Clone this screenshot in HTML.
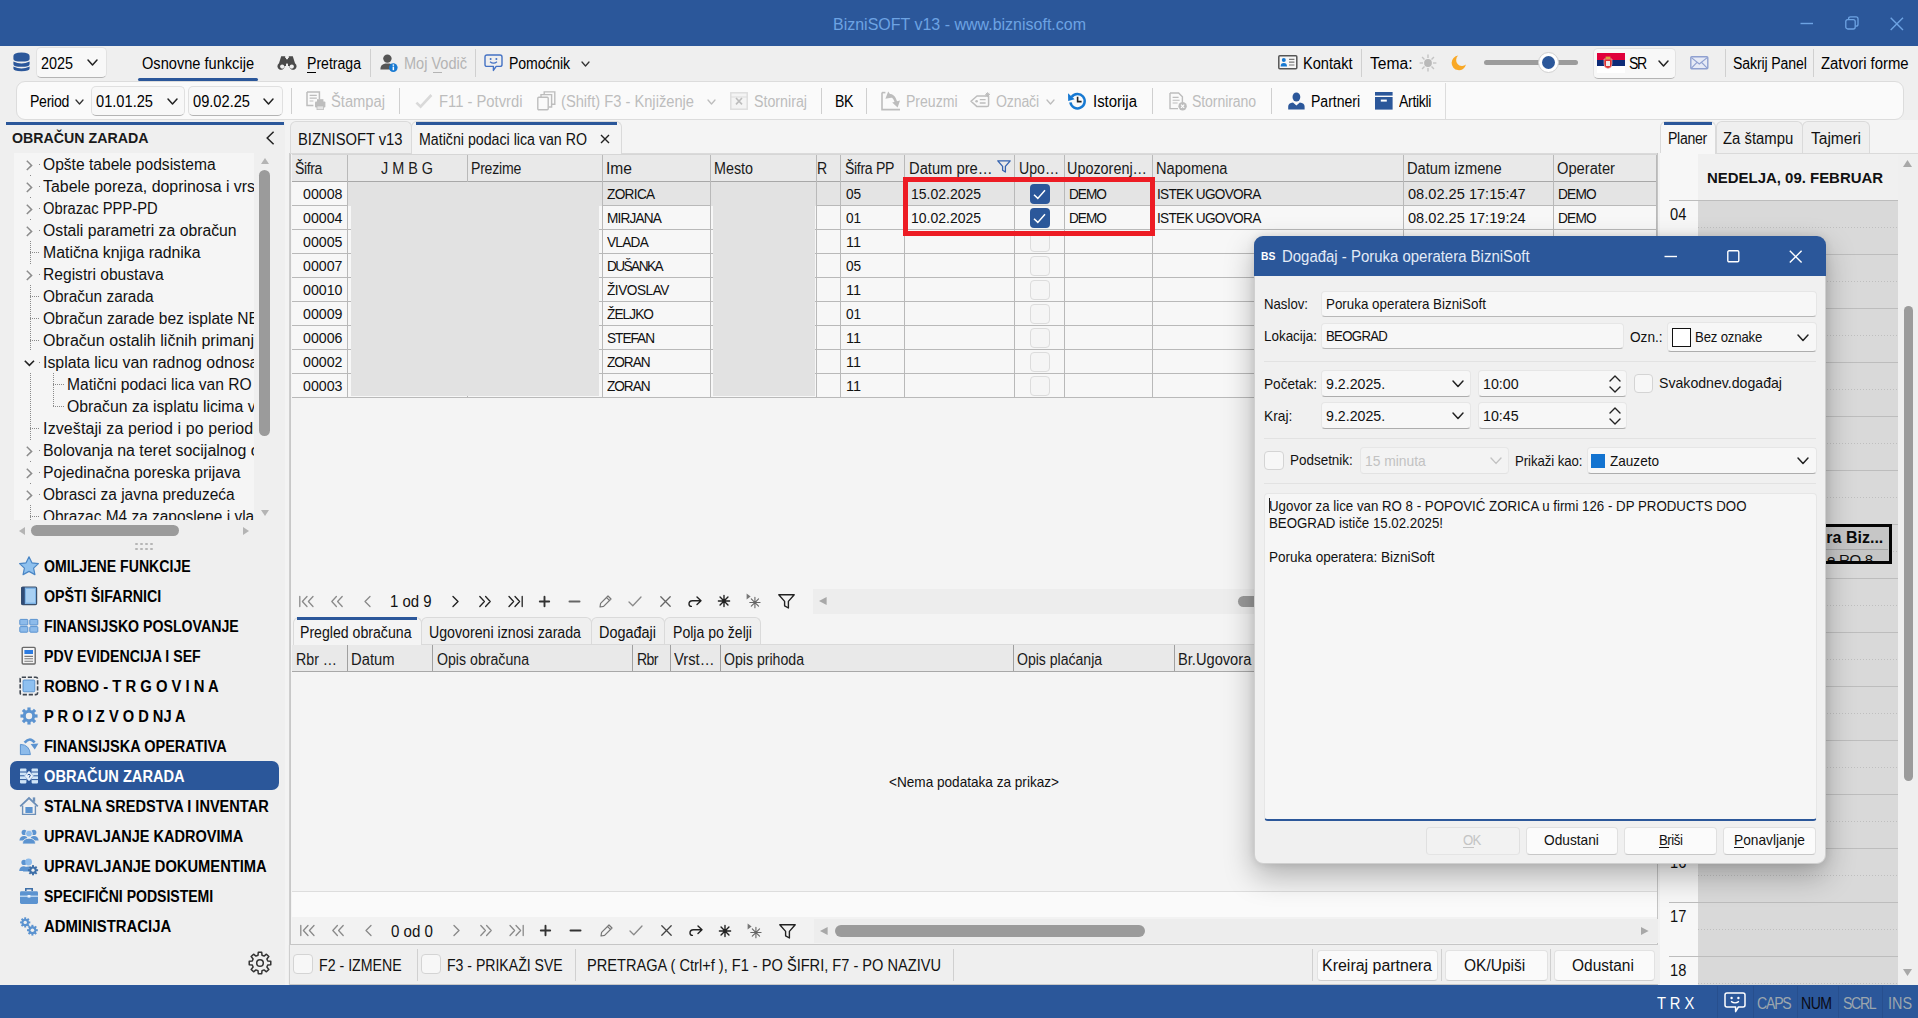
<!DOCTYPE html>
<html><head><meta charset="utf-8"><title>BizniSOFT</title>
<style>
html,body{margin:0;padding:0;}
body{width:1918px;height:1018px;overflow:hidden;position:relative;background:#EFEFEF;font-family:"Liberation Sans",sans-serif;}
.t{position:absolute;white-space:nowrap;height:20px;line-height:20px;font-size:15px;}
.b{position:absolute;box-sizing:border-box;}
svg.b{overflow:visible;}
</style></head><body>
<div class="b" style="left:0px;top:0px;width:1918px;height:46px;background:#2B579A;"></div>
<div class="t" style="left:832.7px;top:15px;font-size:17px;color:#6DA3E3;transform:scaleX(0.9407);transform-origin:0 50%;">BizniSOFT v13 - www.biznisoft.com</div>
<svg class="b" style="left:1800px;top:22px;" width="14" height="3" viewBox="0 0 14 3"><path d="M0.5 1.5 H13" stroke="#6DA3E3" stroke-width="1.4" fill="none"/></svg>
<svg class="b" style="left:1845px;top:16px;" width="14" height="14" viewBox="0 0 14 14"><rect x="0.8" y="3.6" width="9.4" height="9.4" rx="2" fill="none" stroke="#6DA3E3" stroke-width="1.3"/><path d="M3.6 3.4 V2.8 Q3.6 0.8 5.6 0.8 H11 Q13 0.8 13 2.8 V8.2 Q13 10.2 11 10.2 H10.4" fill="none" stroke="#6DA3E3" stroke-width="1.3"/></svg>
<svg class="b" style="left:1890px;top:16.5px;" width="14" height="14" viewBox="0 0 14 14"><path d="M0.7 0.7 L13 13 M13 0.7 L0.7 13" stroke="#6DA3E3" stroke-width="1.4" fill="none"/></svg>
<div class="b" style="left:0px;top:46px;width:1918px;height:36px;background:#EFEFEF;"></div>
<svg class="b" style="left:13px;top:51.6px;" width="17" height="19.4" viewBox="0 0 17 19.4"><g fill="#2B579A"><path d="M0.4 4 Q0.4 0.4 8.5 0.4 Q16.6 0.4 16.6 4 V7 Q16.6 9.6 8.5 9.6 Q0.4 9.6 0.4 7Z"/><path d="M0.4 9.4 Q8.5 13.4 16.6 9.4 V12.2 Q16.6 14.8 8.5 14.8 Q0.4 14.8 0.4 12.2Z"/><path d="M0.4 14.4 Q8.5 18.4 16.6 14.4 V16.4 Q16.6 19.2 8.5 19.2 Q0.4 19.2 0.4 16.4Z"/></g></svg>
<div class="b" style="left:36.3px;top:46.6px;width:70.6px;height:31px;background:#F8F8F8;border:1px solid #E2E2E2;border-bottom:1.5px solid #B4B4B4;border-radius:5px;"></div>
<div class="t" style="left:40.7px;top:54px;font-size:16px;color:#000;transform:scaleX(0.8990);transform-origin:0 50%;">2025</div>
<svg class="b" style="left:87px;top:59px;" width="11" height="7" viewBox="0 0 11 7"><path d="M1 1 L5.5 6 L10 1" fill="none" stroke="#222" stroke-width="1.5" stroke-linecap="round" stroke-linejoin="round"/></svg>
<div class="t" style="left:141.7px;top:54px;font-size:16px;color:#000;transform:scaleX(0.9125);transform-origin:0 50%;">Osnovne funkcije</div>
<div class="b" style="left:138px;top:78px;width:120px;height:3px;background:#2B579A;border-radius:2px;"></div>
<svg class="b" style="left:278px;top:55px;" width="18" height="16" viewBox="0 0 18 16"><g fill="#4A4A4A"><path d="M3.2 1.2 H7.2 V3 H8 V11 H6.6 A3.6 3.6 0 1 1 1 8.2 Z"/><path d="M14.8 1.2 H10.8 V3 H10 V11 H11.4 A3.6 3.6 0 1 0 17 8.2 Z"/><rect x="7.6" y="4.2" width="2.8" height="4.4"/></g><circle cx="4.2" cy="11.6" r="2.1" fill="#EFEFEF"/><circle cx="13.8" cy="11.6" r="2.1" fill="#EFEFEF"/></svg>
<div class="t" style="left:306.7px;top:54px;font-size:16px;color:#000;transform:scaleX(0.8800);transform-origin:0 50%;letter-spacing:-0.001px;">Pretraga</div>
<div class="b" style="left:307px;top:72px;width:9px;height:1px;background:#000;"></div>
<div class="b" style="left:370px;top:49px;width:1px;height:28px;background:#D0D0D0;"></div>
<svg class="b" style="left:380px;top:54px;" width="18" height="18" viewBox="0 0 18 18"><g fill="#555"><circle cx="7.4" cy="4.6" r="4.2"/><path d="M0.4 15.4 Q0.4 10.4 5.4 9.6 H9.4 Q12.2 10 13 12 L10 15.6 Z"/></g><circle cx="13.3" cy="13.6" r="4.3" fill="#1779D2"/><rect x="12.6" y="12.6" width="1.5" height="3.6" fill="#fff"/><rect x="12.6" y="10.4" width="1.5" height="1.4" fill="#fff"/></svg>
<div class="t" style="left:403.7px;top:54px;font-size:16px;color:#B4B4B4;transform:scaleX(0.9082);transform-origin:0 50%;">Moj Vodič</div>
<div class="b" style="left:433px;top:72px;width:9px;height:1px;background:#B4B4B4;"></div>
<div class="b" style="left:475px;top:49px;width:1px;height:28px;background:#D0D0D0;"></div>
<svg class="b" style="left:484px;top:54px;" width="19" height="18" viewBox="0 0 19 18"><path d="M3 1 H16 Q18 1 18 3 V10.4 Q18 12.4 16 12.4 H12.2 L9.4 16.4 V12.4 H3 Q1 12.4 1 10.4 V3 Q1 1 3 1 Z" fill="none" stroke="#4472C4" stroke-width="1.4" stroke-linejoin="round"/><circle cx="6.6" cy="5" r="1" fill="#4472C4"/><circle cx="12.4" cy="5" r="1" fill="#4472C4"/><path d="M6 7.8 Q9.5 10.6 13 7.8" fill="none" stroke="#4472C4" stroke-width="1.2"/></svg>
<div class="t" style="left:508.7px;top:54px;font-size:16px;color:#000;transform:scaleX(0.8800);transform-origin:0 50%;letter-spacing:-0.117px;">Pomoćnik</div>
<svg class="b" style="left:581px;top:60.5px;" width="9" height="6" viewBox="0 0 9 6"><path d="M1 1 L4.5 5 L8 1" fill="none" stroke="#333" stroke-width="1.3" stroke-linecap="round" stroke-linejoin="round"/></svg>
<svg class="b" style="left:1278px;top:55px;" width="20" height="15" viewBox="0 0 20 15"><rect x="0.8" y="0.8" width="18" height="13" rx="1" fill="#F6F6F6" stroke="#555" stroke-width="1.5"/><circle cx="5.8" cy="5" r="2" fill="#1779D2"/><path d="M2.6 11.4 Q2.6 8 5.8 8 Q9 8 9 11.4Z" fill="#1779D2"/><path d="M11 4.4 H16.4 M11 7.2 H16.4 M11 10 H16.4" stroke="#777" stroke-width="1.2"/></svg>
<div class="t" style="left:1302.7px;top:54px;font-size:16px;color:#000;transform:scaleX(0.9123);transform-origin:0 50%;">Kontakt</div>
<div class="b" style="left:1361px;top:49px;width:1px;height:28px;background:#D0D0D0;"></div>
<div class="t" style="left:1369.7px;top:54px;font-size:16px;color:#000;transform:scaleX(0.9754);transform-origin:0 50%;">Tema:</div>
<svg class="b" style="left:1419px;top:54px;" width="18" height="18" viewBox="0 0 18 18"><path d="M9 0.6 V4" stroke="#C4C4C4" stroke-width="1.4" transform="rotate(0 9 9)"/><path d="M9 0.6 V4" stroke="#C4C4C4" stroke-width="1.4" transform="rotate(45 9 9)"/><path d="M9 0.6 V4" stroke="#C4C4C4" stroke-width="1.4" transform="rotate(90 9 9)"/><path d="M9 0.6 V4" stroke="#C4C4C4" stroke-width="1.4" transform="rotate(135 9 9)"/><path d="M9 0.6 V4" stroke="#C4C4C4" stroke-width="1.4" transform="rotate(180 9 9)"/><path d="M9 0.6 V4" stroke="#C4C4C4" stroke-width="1.4" transform="rotate(225 9 9)"/><path d="M9 0.6 V4" stroke="#C4C4C4" stroke-width="1.4" transform="rotate(270 9 9)"/><path d="M9 0.6 V4" stroke="#C4C4C4" stroke-width="1.4" transform="rotate(315 9 9)"/><circle cx="9" cy="9" r="3.9" fill="#B9B9B9"/></svg>
<svg class="b" style="left:1451px;top:55px;" width="16" height="16" viewBox="0 0 16 16"><path d="M7.2 0.6 A7.3 7.3 0 1 0 15 9.6 A5.8 5.8 0 0 1 7.2 0.6Z" fill="#F9A825"/></svg>
<div class="b" style="left:1484px;top:60px;width:94px;height:5px;background:#9C9C9C;border-radius:3px;"></div>
<div class="b" style="left:1537.5px;top:52px;width:21px;height:21px;background:#FFFFFF;border-radius:50%;border:1px solid #D0D0D0;"></div>
<div class="b" style="left:1541.5px;top:56px;width:13px;height:13px;background:#2B579A;border-radius:50%;"></div>
<div class="b" style="left:1592.7px;top:47.6px;width:83.3px;height:31px;background:#F8F8F8;border:1px solid #E2E2E2;border-bottom:1.5px solid #B4B4B4;border-radius:5px;"></div>
<div class="b" style="left:1597px;top:53px;width:28px;height:6.7px;background:#E0003C;"></div>
<div class="b" style="left:1597px;top:59.5px;width:28px;height:6.5px;background:#0C2A77;"></div>
<div class="b" style="left:1597px;top:66px;width:28px;height:6.5px;background:#FFFFFF;"></div>
<svg class="b" style="left:1603px;top:56px;" width="10" height="13" viewBox="0 0 10 13"><path d="M1 3 H9 V8 Q9 12 5 12.6 Q1 12 1 8Z" fill="#D33" stroke="#EBC9C9" stroke-width="0.6"/><path d="M2.6 0.6 H7.4 V3 H2.6Z" fill="#D9A441"/><path d="M3 5 H7 V10 H3Z" fill="#F3E9E9"/></svg>
<div class="t" style="left:1628.7px;top:54px;font-size:16px;color:#000;transform:scaleX(0.8800);transform-origin:0 50%;letter-spacing:-1.455px;">SR</div>
<svg class="b" style="left:1657.5px;top:60px;" width="11" height="7" viewBox="0 0 11 7"><path d="M1 1 L5.5 6 L10 1" fill="none" stroke="#222" stroke-width="1.5" stroke-linecap="round" stroke-linejoin="round"/></svg>
<svg class="b" style="left:1689.5px;top:56px;" width="19" height="14" viewBox="0 0 19 14"><rect x="0.8" y="0.8" width="17" height="12" rx="1" fill="#E6EAF6" stroke="#8FA0D0" stroke-width="1.4"/><path d="M1.4 1.6 L9.3 8 L17.2 1.6 M1.4 12.2 L7 6.4 M17.2 12.2 L11.6 6.4" fill="none" stroke="#8FA0D0" stroke-width="1.2"/></svg>
<div class="b" style="left:1725px;top:49px;width:1px;height:28px;background:#D0D0D0;"></div>
<div class="t" style="left:1732.7px;top:54px;font-size:16px;color:#000;transform:scaleX(0.8800);transform-origin:0 50%;letter-spacing:-0.136px;">Sakrij Panel</div>
<div class="b" style="left:1813px;top:49px;width:1px;height:28px;background:#D0D0D0;"></div>
<div class="t" style="left:1820.7px;top:54px;font-size:16px;color:#000;transform:scaleX(0.9295);transform-origin:0 50%;">Zatvori forme</div>
<div class="b" style="left:16px;top:81px;width:1888px;height:39px;background:#FAFAFA;border:1px solid #DCDCDC;border-radius:9px;"></div>
<div class="t" style="left:29.7px;top:92px;font-size:16px;color:#000;transform:scaleX(0.8800);transform-origin:0 50%;letter-spacing:-0.322px;">Period</div>
<svg class="b" style="left:74.5px;top:98.5px;" width="9" height="6" viewBox="0 0 9 6"><path d="M1 1 L4.5 5 L8 1" fill="none" stroke="#333" stroke-width="1.3" stroke-linecap="round" stroke-linejoin="round"/></svg>
<div class="b" style="left:91.2px;top:86.4px;width:94.3px;height:29.5px;background:#F8F8F8;border:1px solid #E0E0E0;border-bottom:1.5px solid #B4B4B4;border-radius:5px;"></div>
<div class="t" style="left:95.7px;top:92px;font-size:16px;color:#000;transform:scaleX(0.9152);transform-origin:0 50%;">01.01.25</div>
<svg class="b" style="left:166.5px;top:98px;" width="11" height="7" viewBox="0 0 11 7"><path d="M1 1 L5.5 6 L10 1" fill="none" stroke="#222" stroke-width="1.5" stroke-linecap="round" stroke-linejoin="round"/></svg>
<div class="b" style="left:187.6px;top:86.4px;width:95px;height:29.5px;background:#F8F8F8;border:1px solid #E0E0E0;border-bottom:1.5px solid #B4B4B4;border-radius:5px;"></div>
<div class="t" style="left:192.7px;top:92px;font-size:16px;color:#000;transform:scaleX(0.9152);transform-origin:0 50%;">09.02.25</div>
<svg class="b" style="left:263px;top:98px;" width="11" height="7" viewBox="0 0 11 7"><path d="M1 1 L5.5 6 L10 1" fill="none" stroke="#222" stroke-width="1.5" stroke-linecap="round" stroke-linejoin="round"/></svg>
<div class="b" style="left:291px;top:88px;width:1px;height:26px;background:#CFCFCF;"></div>
<svg class="b" style="left:306px;top:91px;" width="20" height="19" viewBox="0 0 20 19"><path d="M1 1 H13.4 V8.6 M1 1 V14.6 H7.4" fill="none" stroke="#BDBDBD" stroke-width="1.5"/><path d="M3.6 4.4 H10.8 M3.6 7.2 H10.8 M3.6 10 H7.4" stroke="#BDBDBD" stroke-width="1.2"/><rect x="9" y="10.6" width="10.4" height="5.8" rx="1" fill="#BDBDBD"/><rect x="11" y="8.2" width="6.4" height="3" fill="#BDBDBD"/><rect x="11" y="15" width="6.4" height="3.6" fill="#E4E4E4" stroke="#BDBDBD" stroke-width="0.8"/></svg>
<div class="t" style="left:330.7px;top:92px;font-size:16px;color:#BDBDBD;transform:scaleX(0.9200);transform-origin:0 50%;">Štampaj</div>
<div class="b" style="left:399px;top:88px;width:1px;height:26px;background:#CFCFCF;"></div>
<svg class="b" style="left:415px;top:93px;" width="18" height="16" viewBox="0 0 18 16"><path d="M1.4 9.6 L5.6 13.6 L16.4 2" fill="none" stroke="#D9D9D9" stroke-width="2.6"/></svg>
<div class="t" style="left:438.7px;top:92px;font-size:16px;color:#BDBDBD;transform:scaleX(0.9237);transform-origin:0 50%;">F11 - Potvrdi</div>
<svg class="b" style="left:537px;top:91px;" width="19" height="20" viewBox="0 0 19 20"><rect x="0.8" y="6.2" width="10.4" height="12.6" rx="1" fill="#FAFAFA" stroke="#BDBDBD" stroke-width="1.4"/><path d="M4 6 V3.6 H14.6 V16 H11.6" fill="none" stroke="#BDBDBD" stroke-width="1.4"/><path d="M7.2 3.4 V0.9 H17.8 V13.2 H14.8" fill="none" stroke="#BDBDBD" stroke-width="1.4"/></svg>
<div class="t" style="left:560.7px;top:92px;font-size:16px;color:#BDBDBD;transform:scaleX(0.9176);transform-origin:0 50%;">(Shift) F3 - Knjiženje</div>
<svg class="b" style="left:706.5px;top:98.5px;" width="9" height="6" viewBox="0 0 9 6"><path d="M1 1 L4.5 5 L8 1" fill="none" stroke="#BDBDBD" stroke-width="1.3" stroke-linecap="round" stroke-linejoin="round"/></svg>
<svg class="b" style="left:730px;top:92px;" width="18" height="18" viewBox="0 0 18 18"><rect x="0.8" y="0.8" width="16.4" height="16.4" fill="#F4F4F4" stroke="#DCDCDC" stroke-width="1.4"/><path d="M0.8 5 H17" stroke="#DCDCDC" stroke-width="1"/><path d="M6 6 L12 12.4 M12 6 L6 12.4" stroke="#BDBDBD" stroke-width="1.6"/></svg>
<div class="t" style="left:753.7px;top:92px;font-size:16px;color:#BDBDBD;transform:scaleX(0.8895);transform-origin:0 50%;">Storniraj</div>
<div class="b" style="left:821px;top:88px;width:1px;height:26px;background:#CFCFCF;"></div>
<div class="t" style="left:834.7px;top:92px;font-size:16px;color:#000;transform:scaleX(0.8800);transform-origin:0 50%;letter-spacing:-0.445px;">BK</div>
<div class="b" style="left:866px;top:88px;width:1px;height:26px;background:#CFCFCF;"></div>
<svg class="b" style="left:881px;top:91px;" width="20" height="20" viewBox="0 0 20 20"><path d="M1 1.6 V18.6 H19" fill="none" stroke="#BDBDBD" stroke-width="1.6"/><path d="M1 1.6 H4.4" stroke="#BDBDBD" stroke-width="1.6"/><path d="M7.6 4.6 Q11.4 3.4 13.8 8.2 L15.2 11.4" fill="none" stroke="#BDBDBD" stroke-width="2.6"/><path d="M4.4 7.8 L7.2 0.6 L11.4 6.4Z M11.2 11.6 L19 9.4 L16.6 16.6Z" fill="#BDBDBD"/></svg>
<div class="t" style="left:905.7px;top:92px;font-size:16px;color:#BDBDBD;transform:scaleX(0.8800);transform-origin:0 50%;letter-spacing:-0.023px;">Preuzmi</div>
<svg class="b" style="left:970px;top:92px;" width="21" height="17" viewBox="0 0 21 17"><path d="M7 4 H17 Q18.6 4 18.6 5.6 V13 Q18.6 14.6 17 14.6 H7 L1 9.3Z" fill="none" stroke="#BDBDBD" stroke-width="1.5" stroke-linejoin="round"/><circle cx="6.6" cy="9.3" r="1.3" fill="#BDBDBD"/><path d="M9.8 7.6 H15.6 M9.8 11 H15.6" stroke="#BDBDBD" stroke-width="1.3"/><path d="M17.6 0.2 V5 M15.2 2.6 H20 M15.9 0.9 L19.3 4.3 M19.3 0.9 L15.9 4.3" stroke="#BDBDBD" stroke-width="1"/></svg>
<div class="t" style="left:995.7px;top:92px;font-size:16px;color:#BDBDBD;transform:scaleX(0.8800);transform-origin:0 50%;letter-spacing:-0.156px;">Označi</div>
<svg class="b" style="left:1045.5px;top:98.5px;" width="9" height="6" viewBox="0 0 9 6"><path d="M1 1 L4.5 5 L8 1" fill="none" stroke="#BDBDBD" stroke-width="1.3" stroke-linecap="round" stroke-linejoin="round"/></svg>
<svg class="b" style="left:1068px;top:91px;" width="19" height="20" viewBox="0 0 19 20"><path d="M3.6 6 A7.2 7.2 0 1 1 2.4 11.4" fill="none" stroke="#1779D2" stroke-width="2.5"/><path d="M0 2.2 L6.6 8.2 L0.2 10Z" fill="#1779D2"/><path d="M9.6 5.8 V10.6 H13.6" fill="none" stroke="#222" stroke-width="1.6"/></svg>
<div class="t" style="left:1092.7px;top:92px;font-size:16px;color:#000;transform:scaleX(0.9337);transform-origin:0 50%;">Istorija</div>
<div class="b" style="left:1152px;top:88px;width:1px;height:26px;background:#CFCFCF;"></div>
<svg class="b" style="left:1169px;top:92px;" width="19" height="19" viewBox="0 0 19 19"><path d="M1 1 H9.6 L13.4 4.8 V10 M1 1 V16.6 H9" fill="none" stroke="#BDBDBD" stroke-width="1.4"/><path d="M3.6 5.4 H9.6 M3.6 8.2 H10.6 M3.6 11 H8.6" stroke="#BDBDBD" stroke-width="1.1"/><circle cx="13.6" cy="14.2" r="4.2" fill="#BDBDBD"/><path d="M12 12.6 L15.2 15.8 M15.2 12.6 L12 15.8" stroke="#fff" stroke-width="1.1"/></svg>
<div class="t" style="left:1191.7px;top:92px;font-size:16px;color:#BDBDBD;transform:scaleX(0.8800);transform-origin:0 50%;letter-spacing:-0.110px;">Stornirano</div>
<div class="b" style="left:1271px;top:88px;width:1px;height:26px;background:#CFCFCF;"></div>
<svg class="b" style="left:1288px;top:92px;" width="17" height="18" viewBox="0 0 17 18"><g fill="#2B579A"><ellipse cx="8.4" cy="5" rx="3.9" ry="4.6"/><path d="M0.2 17.4 V14.4 Q0.2 11.4 5 10.6 L8.4 13.4 L11.8 10.6 Q16.6 11.4 16.6 14.4 V17.4Z"/></g></svg>
<div class="t" style="left:1310.7px;top:92px;font-size:16px;color:#000;transform:scaleX(0.8800);transform-origin:0 50%;letter-spacing:-0.043px;">Partneri</div>
<svg class="b" style="left:1375px;top:92px;" width="18" height="18" viewBox="0 0 18 18"><g fill="#2B579A"><rect x="0" y="0" width="17.6" height="3.6"/><rect x="0" y="5" width="17.6" height="12.6"/></g><rect x="5.8" y="7.6" width="6" height="2" fill="#fff"/></svg>
<div class="t" style="left:1398.7px;top:92px;font-size:16px;color:#000;transform:scaleX(0.8800);transform-origin:0 50%;letter-spacing:-0.393px;">Artikli</div>
<div class="b" style="left:1445px;top:83px;width:1px;height:36px;background:#DCDCDC;"></div>
<div class="b" style="left:0px;top:120px;width:288px;height:865px;background:#EFEFEF;"></div>
<div class="b" style="left:6px;top:122px;width:278px;height:3px;background:#2B579A;"></div>
<div class="t" style="left:12.3px;top:128px;font-size:15px;color:#1A1A1A;transform:scaleX(0.9462);transform-origin:0 50%;font-weight:bold;">OBRAČUN ZARADA</div>
<svg class="b" style="left:266px;top:131px;" width="9" height="14" viewBox="0 0 9 14"><path d="M7.6 0.8 L1.2 7 L7.6 13.2" fill="none" stroke="#222" stroke-width="1.5"/></svg>
<div class="b" style="left:14px;top:153px;width:240px;height:367px;background:#F5F5F5;overflow:hidden;">
<div class="t" style="left:29.1px;top:2px;font-size:16px;color:#111;transform:scaleX(0.9752);transform-origin:0 50%;">Opšte tabele podsistema</div>
<svg class="b" style="left:11.5px;top:6.5px;" width="7" height="11" viewBox="0 0 7 11"><path d="M0.8 0.8 L5.6 5.4 L0.8 10" fill="none" stroke="#8C8C8C" stroke-width="1.5"/></svg>
<div class="b" style="left:25px;top:11.1px;width:1px;height:1px;background:#8A8A8A;"></div>
<div class="t" style="left:29.1px;top:24px;font-size:16px;color:#111;transform:scaleX(0.9934);transform-origin:0 50%;">Tabele poreza, doprinosa i vrste</div>
<svg class="b" style="left:11.5px;top:28.5px;" width="7" height="11" viewBox="0 0 7 11"><path d="M0.8 0.8 L5.6 5.4 L0.8 10" fill="none" stroke="#8C8C8C" stroke-width="1.5"/></svg>
<div class="b" style="left:25px;top:33.1px;width:1px;height:1px;background:#8A8A8A;"></div>
<div class="b" style="left:15.5px;top:22.1px;width:1px;height:1px;background:#8A8A8A;"></div>
<div class="t" style="left:29.1px;top:46px;font-size:16px;color:#111;transform:scaleX(0.9206);transform-origin:0 50%;">Obrazac PPP-PD</div>
<svg class="b" style="left:11.5px;top:50.5px;" width="7" height="11" viewBox="0 0 7 11"><path d="M0.8 0.8 L5.6 5.4 L0.8 10" fill="none" stroke="#8C8C8C" stroke-width="1.5"/></svg>
<div class="b" style="left:25px;top:55.1px;width:1px;height:1px;background:#8A8A8A;"></div>
<div class="b" style="left:15.5px;top:44.1px;width:1px;height:1px;background:#8A8A8A;"></div>
<div class="t" style="left:29.1px;top:68px;font-size:16px;color:#111;transform:scaleX(0.9851);transform-origin:0 50%;">Ostali parametri za obračun</div>
<svg class="b" style="left:11.5px;top:72.5px;" width="7" height="11" viewBox="0 0 7 11"><path d="M0.8 0.8 L5.6 5.4 L0.8 10" fill="none" stroke="#8C8C8C" stroke-width="1.5"/></svg>
<div class="b" style="left:25px;top:77.1px;width:1px;height:1px;background:#8A8A8A;"></div>
<div class="b" style="left:15.5px;top:66.1px;width:1px;height:1px;background:#8A8A8A;"></div>
<div class="t" style="left:29.1px;top:90px;font-size:16px;color:#111;transform:scaleX(0.9899);transform-origin:0 50%;">Matična knjiga radnika</div>
<div class="b" style="left:16px;top:88px;width:1px;height:22px;background-image:repeating-linear-gradient(to bottom,#8A8A8A 0 1px,transparent 1px 2px);"></div>
<div class="b" style="left:16px;top:99px;height:1px;width:10px;background-image:repeating-linear-gradient(to right,#8A8A8A 0 1px,transparent 1px 2px);"></div>
<div class="t" style="left:29.1px;top:112px;font-size:16px;color:#111;transform:scaleX(0.9756);transform-origin:0 50%;">Registri obustava</div>
<svg class="b" style="left:11.5px;top:116.5px;" width="7" height="11" viewBox="0 0 7 11"><path d="M0.8 0.8 L5.6 5.4 L0.8 10" fill="none" stroke="#8C8C8C" stroke-width="1.5"/></svg>
<div class="b" style="left:25px;top:121.1px;width:1px;height:1px;background:#8A8A8A;"></div>
<div class="b" style="left:15.5px;top:110.1px;width:1px;height:1px;background:#8A8A8A;"></div>
<div class="t" style="left:29.1px;top:134px;font-size:16px;color:#111;transform:scaleX(0.9639);transform-origin:0 50%;">Obračun zarada</div>
<div class="b" style="left:16px;top:132px;width:1px;height:22px;background-image:repeating-linear-gradient(to bottom,#8A8A8A 0 1px,transparent 1px 2px);"></div>
<div class="b" style="left:16px;top:143px;height:1px;width:10px;background-image:repeating-linear-gradient(to right,#8A8A8A 0 1px,transparent 1px 2px);"></div>
<div class="t" style="left:29.1px;top:156px;font-size:16px;color:#111;transform:scaleX(0.9713);transform-origin:0 50%;">Obračun zarade bez isplate NETO</div>
<div class="b" style="left:16px;top:154px;width:1px;height:22px;background-image:repeating-linear-gradient(to bottom,#8A8A8A 0 1px,transparent 1px 2px);"></div>
<div class="b" style="left:16px;top:165px;height:1px;width:10px;background-image:repeating-linear-gradient(to right,#8A8A8A 0 1px,transparent 1px 2px);"></div>
<div class="t" style="left:29.1px;top:178px;font-size:16px;color:#111;letter-spacing:0.038px;">Obračun ostalih ličnih primanja</div>
<div class="b" style="left:16px;top:176px;width:1px;height:22px;background-image:repeating-linear-gradient(to bottom,#8A8A8A 0 1px,transparent 1px 2px);"></div>
<div class="b" style="left:16px;top:187px;height:1px;width:10px;background-image:repeating-linear-gradient(to right,#8A8A8A 0 1px,transparent 1px 2px);"></div>
<div class="t" style="left:29.1px;top:200px;font-size:16px;color:#111;transform:scaleX(0.9926);transform-origin:0 50%;">Isplata licu van radnog odnosa</div>
<svg class="b" style="left:10px;top:206.6px;" width="11" height="7" viewBox="0 0 11 7"><path d="M0.8 0.8 L5.4 5.4 L10 0.8" fill="none" stroke="#222" stroke-width="1.6"/></svg>
<div class="b" style="left:25px;top:209.1px;width:1px;height:1px;background:#8A8A8A;"></div>
<div class="t" style="left:53px;top:222px;font-size:16px;color:#111;transform:scaleX(0.9751);transform-origin:0 50%;">Matični podaci lica van RO</div>
<div class="b" style="left:39px;top:220px;width:1px;height:22px;background-image:repeating-linear-gradient(to bottom,#8A8A8A 0 1px,transparent 1px 2px);"></div>
<div class="b" style="left:39px;top:231px;height:1px;width:11px;background-image:repeating-linear-gradient(to right,#8A8A8A 0 1px,transparent 1px 2px);"></div>
<div class="t" style="left:53px;top:244px;font-size:16px;color:#111;transform:scaleX(0.9863);transform-origin:0 50%;">Obračun za isplatu licima van</div>
<div class="b" style="left:39px;top:242px;width:1px;height:12px;background-image:repeating-linear-gradient(to bottom,#8A8A8A 0 1px,transparent 1px 2px);"></div>
<div class="b" style="left:39px;top:253px;height:1px;width:11px;background-image:repeating-linear-gradient(to right,#8A8A8A 0 1px,transparent 1px 2px);"></div>
<div class="t" style="left:29.1px;top:266px;font-size:16px;color:#111;letter-spacing:0.098px;">Izveštaji za period i po periodima</div>
<div class="b" style="left:16px;top:264px;width:1px;height:22px;background-image:repeating-linear-gradient(to bottom,#8A8A8A 0 1px,transparent 1px 2px);"></div>
<div class="b" style="left:16px;top:275px;height:1px;width:10px;background-image:repeating-linear-gradient(to right,#8A8A8A 0 1px,transparent 1px 2px);"></div>
<div class="t" style="left:29.1px;top:288px;font-size:16px;color:#111;transform:scaleX(0.9937);transform-origin:0 50%;">Bolovanja na teret socijalnog osig</div>
<svg class="b" style="left:11.5px;top:292.5px;" width="7" height="11" viewBox="0 0 7 11"><path d="M0.8 0.8 L5.6 5.4 L0.8 10" fill="none" stroke="#8C8C8C" stroke-width="1.5"/></svg>
<div class="b" style="left:25px;top:297.1px;width:1px;height:1px;background:#8A8A8A;"></div>
<div class="b" style="left:15.5px;top:286.1px;width:1px;height:1px;background:#8A8A8A;"></div>
<div class="t" style="left:29.1px;top:310px;font-size:16px;color:#111;transform:scaleX(0.9830);transform-origin:0 50%;">Pojedinačna poreska prijava</div>
<svg class="b" style="left:11.5px;top:314.5px;" width="7" height="11" viewBox="0 0 7 11"><path d="M0.8 0.8 L5.6 5.4 L0.8 10" fill="none" stroke="#8C8C8C" stroke-width="1.5"/></svg>
<div class="b" style="left:25px;top:319.1px;width:1px;height:1px;background:#8A8A8A;"></div>
<div class="b" style="left:15.5px;top:308.1px;width:1px;height:1px;background:#8A8A8A;"></div>
<div class="t" style="left:29.1px;top:332px;font-size:16px;color:#111;transform:scaleX(0.9661);transform-origin:0 50%;">Obrasci za javna preduzeća</div>
<svg class="b" style="left:11.5px;top:336.5px;" width="7" height="11" viewBox="0 0 7 11"><path d="M0.8 0.8 L5.6 5.4 L0.8 10" fill="none" stroke="#8C8C8C" stroke-width="1.5"/></svg>
<div class="b" style="left:25px;top:341.1px;width:1px;height:1px;background:#8A8A8A;"></div>
<div class="b" style="left:15.5px;top:330.1px;width:1px;height:1px;background:#8A8A8A;"></div>
<div class="t" style="left:29.1px;top:354px;font-size:16px;color:#111;transform:scaleX(0.9654);transform-origin:0 50%;">Obrazac M4 za zaposlene i vlasnike</div>
<div class="b" style="left:16px;top:352px;width:1px;height:22px;background-image:repeating-linear-gradient(to bottom,#8A8A8A 0 1px,transparent 1px 2px);"></div>
<div class="b" style="left:16px;top:363px;height:1px;width:10px;background-image:repeating-linear-gradient(to right,#8A8A8A 0 1px,transparent 1px 2px);"></div>
<div class="b" style="left:16px;top:220px;width:1px;height:66px;background-image:repeating-linear-gradient(to bottom,#8A8A8A 0 1px,transparent 1px 2px);"></div>
<div class="b" style="left:39px;top:220px;width:1px;height:12px;background-image:repeating-linear-gradient(to bottom,#8A8A8A 0 1px,transparent 1px 2px);"></div>
</div>
<svg class="b" style="left:260.5px;top:158px;" width="8" height="6" viewBox="0 0 8 6"><path d="M4 0 L8 6 H0Z" fill="#B4B4B4"/></svg>
<div class="b" style="left:259px;top:170px;width:11px;height:266px;background:#9B9B9B;border-radius:5.5px;"></div>
<svg class="b" style="left:260.5px;top:509.5px;" width="8" height="6" viewBox="0 0 8 6"><path d="M0 0 H8 L4 6Z" fill="#B4B4B4"/></svg>
<svg class="b" style="left:19px;top:527px;" width="6" height="8" viewBox="0 0 6 8"><path d="M6 0 V8 L0 4Z" fill="#B4B4B4"/></svg>
<div class="b" style="left:31px;top:525px;width:148px;height:11px;background:#9B9B9B;border-radius:5.5px;"></div>
<svg class="b" style="left:243px;top:527px;" width="6" height="8" viewBox="0 0 6 8"><path d="M0 0 V8 L6 4Z" fill="#B4B4B4"/></svg>
<div class="b" style="left:135.3px;top:543.2px;width:2.3px;height:2.3px;background:#B6B6B6;border-radius:1.2px;"></div>
<div class="b" style="left:140.3px;top:543.2px;width:2.3px;height:2.3px;background:#B6B6B6;border-radius:1.2px;"></div>
<div class="b" style="left:145.3px;top:543.2px;width:2.3px;height:2.3px;background:#B6B6B6;border-radius:1.2px;"></div>
<div class="b" style="left:150.3px;top:543.2px;width:2.3px;height:2.3px;background:#B6B6B6;border-radius:1.2px;"></div>
<div class="b" style="left:135.3px;top:547.8px;width:2.3px;height:2.3px;background:#B6B6B6;border-radius:1.2px;"></div>
<div class="b" style="left:140.3px;top:547.8px;width:2.3px;height:2.3px;background:#B6B6B6;border-radius:1.2px;"></div>
<div class="b" style="left:145.3px;top:547.8px;width:2.3px;height:2.3px;background:#B6B6B6;border-radius:1.2px;"></div>
<div class="b" style="left:150.3px;top:547.8px;width:2.3px;height:2.3px;background:#B6B6B6;border-radius:1.2px;"></div>
<div class="t" style="left:44px;top:557px;font-size:16px;color:#000;transform:scaleX(0.8824);transform-origin:0 50%;font-weight:bold;">OMILJENE FUNKCIJE</div>
<svg class="b" style="left:19px;top:555.8px;" width="20" height="20" viewBox="0 0 20 20"><path d="M10 0.8 L12.9 6.8 L19.4 7.6 L14.6 12.1 L15.9 18.6 L10 15.4 L4.1 18.6 L5.4 12.1 L0.6 7.6 L7.1 6.8Z" fill="#8FC1EE" stroke="#4A86C5" stroke-width="1.2" stroke-linejoin="round"/></svg>
<div class="t" style="left:44px;top:587px;font-size:16px;color:#000;transform:scaleX(0.8908);transform-origin:0 50%;font-weight:bold;">OPŠTI ŠIFARNICI</div>
<svg class="b" style="left:19px;top:585.8px;" width="20" height="20" viewBox="0 0 20 20"><rect x="2.6" y="1" width="15" height="17.6" rx="1.2" fill="#7DB3E6" stroke="#3A4F6A" stroke-width="1.2"/><rect x="2.6" y="1" width="3.2" height="17.6" fill="#2F4C78"/><rect x="7" y="3" width="9" height="13.6" fill="#A8D0F3"/></svg>
<div class="t" style="left:44px;top:617px;font-size:16px;color:#000;transform:scaleX(0.8842);transform-origin:0 50%;font-weight:bold;">FINANSIJSKO POSLOVANJE</div>
<svg class="b" style="left:19px;top:615.8px;" width="20" height="20" viewBox="0 0 20 20"><g fill="#8DBBEA" stroke="#5B93D0" stroke-width="1"><rect x="0.8" y="3.4" width="8" height="5.6" rx="0.8"/><rect x="10.8" y="3.4" width="8" height="5.6" rx="0.8"/><rect x="0.8" y="10.6" width="8" height="5.6" rx="0.8"/><rect x="10.8" y="10.6" width="8" height="5.6" rx="0.8"/></g></svg>
<div class="t" style="left:44px;top:647px;font-size:16px;color:#000;transform:scaleX(0.8842);transform-origin:0 50%;font-weight:bold;">PDV EVIDENCIJA I SEF</div>
<svg class="b" style="left:19px;top:645.8px;" width="20" height="20" viewBox="0 0 20 20"><rect x="3.2" y="1.4" width="13" height="16.6" rx="1" fill="#F4F4F4" stroke="#6A6A6A" stroke-width="1.4"/><rect x="5.4" y="4" width="8.6" height="4" fill="#2C7BE0"/><path d="M5.4 10.4 H14 M5.4 12.8 H14 M5.4 15.2 H14" stroke="#7A7A7A" stroke-width="1.1"/></svg>
<div class="t" style="left:44px;top:677px;font-size:16px;color:#000;transform:scaleX(0.9256);transform-origin:0 50%;font-weight:bold;">ROBNO - T R G O V I N A</div>
<svg class="b" style="left:19px;top:675.8px;" width="20" height="20" viewBox="0 0 20 20"><rect x="1.2" y="1.2" width="17.4" height="17.4" rx="1.6" fill="none" stroke="#3F4650" stroke-width="1.6" stroke-dasharray="4.2 1.8"/><rect x="4" y="4" width="11.8" height="11.8" rx="1" fill="#8EC0F0" stroke="#4A86C5" stroke-width="0.8"/></svg>
<div class="t" style="left:44px;top:707px;font-size:16px;color:#000;transform:scaleX(0.9160);transform-origin:0 50%;font-weight:bold;">P R O I Z V O D NJ A</div>
<svg class="b" style="left:19px;top:705.8px;" width="20" height="20" viewBox="0 0 20 20"><rect x="8.388" y="1.444" width="3.224" height="17.112" fill="#5B93D0" transform="rotate(0 10 10)"/><rect x="8.388" y="1.444" width="3.224" height="17.112" fill="#5B93D0" transform="rotate(45 10 10)"/><rect x="8.388" y="1.444" width="3.224" height="17.112" fill="#5B93D0" transform="rotate(90 10 10)"/><rect x="8.388" y="1.444" width="3.224" height="17.112" fill="#5B93D0" transform="rotate(135 10 10)"/><circle cx="10" cy="10" r="6.2" fill="#5B93D0"/><circle cx="10" cy="10" r="3.2" fill="#EFEFEF"/></svg>
<div class="t" style="left:44px;top:737px;font-size:16px;color:#000;transform:scaleX(0.9067);transform-origin:0 50%;font-weight:bold;">FINANSIJSKA OPERATIVA</div>
<svg class="b" style="left:19px;top:735.8px;" width="20" height="20" viewBox="0 0 20 20"><path d="M1.4 18.6 V8.4 Q10.6 8.6 11.4 18.6Z" fill="#8DBBEA" stroke="#5B93D0" stroke-width="1"/><path d="M5.6 6.6 Q11 0.4 15.6 6.6" fill="none" stroke="#5B93D0" stroke-width="2.6"/><path d="M11.6 8 L19.4 7.4 L15.8 13.4Z" fill="#5B93D0"/></svg>
<div class="b" style="left:10px;top:761.2px;width:269px;height:29.3px;background:#2B579A;border-radius:7px;"></div>
<div class="t" style="left:44px;top:767px;font-size:16px;color:#FFFFFF;transform:scaleX(0.9150);transform-origin:0 50%;font-weight:bold;">OBRAČUN ZARADA</div>
<svg class="b" style="left:19px;top:765.8px;" width="20" height="20" viewBox="0 0 20 20"><rect x="1" y="2.4" width="6.4" height="15" rx="0.8" fill="#CFE4F7"/><rect x="12.6" y="2.4" width="6.4" height="15" rx="0.8" fill="#CFE4F7"/><path d="M1 6 H7.4 M1 9.8 H7.4 M1 13.6 H7.4 M12.6 6 H19 M12.6 9.8 H19 M12.6 13.6 H19" stroke="#2B579A" stroke-width="1"/><path d="M10 5 L14.6 10 L10 15 L5.4 10Z" fill="#E8F1FB" stroke="#9CB9DD" stroke-width="0.8"/><path d="M8.6 9 Q10 7.4 11.4 9 L10.2 11.6" fill="none" stroke="#2B579A" stroke-width="1"/></svg>
<div class="t" style="left:44px;top:797px;font-size:16px;color:#000;transform:scaleX(0.9104);transform-origin:0 50%;font-weight:bold;">STALNA SREDSTVA I INVENTAR</div>
<svg class="b" style="left:19px;top:795.8px;" width="20" height="20" viewBox="0 0 20 20"><path d="M1.2 10.4 L10 2 L18.8 10.4" fill="none" stroke="#6C8FB8" stroke-width="1.8"/><path d="M3.6 9.4 V18.4 H16.4 V9.4" fill="#F2F2F2" stroke="#6C8FB8" stroke-width="1.4"/><rect x="6.4" y="11" width="7.2" height="6" fill="#5B93D0"/><rect x="13.8" y="1.4" width="2.4" height="4.4" fill="#6C8FB8"/></svg>
<div class="t" style="left:44px;top:827px;font-size:16px;color:#000;transform:scaleX(0.9084);transform-origin:0 50%;font-weight:bold;">UPRAVLJANJE KADROVIMA</div>
<svg class="b" style="left:19px;top:825.8px;" width="20" height="20" viewBox="0 0 20 20"><g fill="#5B93D0"><circle cx="5.2" cy="6.4" r="2.6"/><circle cx="14.8" cy="6.4" r="2.6"/><path d="M0.4 14.6 Q0.6 10.2 5.2 10 Q8 10.2 8.4 12 L6 14.6Z"/><path d="M19.6 14.6 Q19.4 10.2 14.8 10 Q12 10.2 11.6 12 L14 14.6Z"/></g><circle cx="10" cy="7.6" r="3.4" fill="#8DBBEA" stroke="#EFEFEF" stroke-width="0.8"/><path d="M3.4 18 Q3.6 12.4 10 12.2 Q16.4 12.4 16.6 18Z" fill="#5B93D0" stroke="#EFEFEF" stroke-width="0.8"/></svg>
<div class="t" style="left:44px;top:857px;font-size:16px;color:#000;transform:scaleX(0.9188);transform-origin:0 50%;font-weight:bold;">UPRAVLJANJE DOKUMENTIMA</div>
<svg class="b" style="left:19px;top:855.8px;" width="20" height="20" viewBox="0 0 20 20"><g fill="#5B93D0"><circle cx="5" cy="6.4" r="2.6"/><path d="M0.2 15 Q0.4 10.4 5 10.2 Q8 10.4 8.6 12.4 L6 15Z"/></g><circle cx="9.6" cy="6" r="3.4" fill="#8DBBEA"/><path d="M4 15.6 Q4.4 10.6 10 10.6 L11.6 15.6Z" fill="#5B93D0"/><rect x="13.038" y="9.094" width="1.924" height="10.212" fill="#3E6FA8" transform="rotate(0 14 14.2)"/><rect x="13.038" y="9.094" width="1.924" height="10.212" fill="#3E6FA8" transform="rotate(45 14 14.2)"/><rect x="13.038" y="9.094" width="1.924" height="10.212" fill="#3E6FA8" transform="rotate(90 14 14.2)"/><rect x="13.038" y="9.094" width="1.924" height="10.212" fill="#3E6FA8" transform="rotate(135 14 14.2)"/><circle cx="14" cy="14.2" r="3.7" fill="#3E6FA8"/><circle cx="14" cy="14.2" r="1.6" fill="#EFEFEF"/></svg>
<div class="t" style="left:44px;top:887px;font-size:16px;color:#000;transform:scaleX(0.8800);transform-origin:0 50%;letter-spacing:-0.031px;font-weight:bold;">SPECIFIČNI PODSISTEMI</div>
<svg class="b" style="left:19px;top:885.8px;" width="20" height="20" viewBox="0 0 20 20"><rect x="1" y="5.2" width="18" height="12.8" rx="1.4" fill="#5B93D0"/><path d="M6.8 5 V2.8 H13.2 V5" fill="none" stroke="#3E6FA8" stroke-width="1.6"/><path d="M1 10.2 H19" stroke="#CFE4F7" stroke-width="1.2"/><rect x="8.6" y="9" width="2.8" height="2.6" fill="#EAF2FB"/></svg>
<div class="t" style="left:44px;top:917px;font-size:16px;color:#000;transform:scaleX(0.9292);transform-origin:0 50%;font-weight:bold;">ADMINISTRACIJA</div>
<svg class="b" style="left:19px;top:915.8px;" width="20" height="20" viewBox="0 0 20 20"><rect x="5.238" y="1.294" width="1.924" height="10.212" fill="#5B93D0" transform="rotate(0 6.2 6.4)"/><rect x="5.238" y="1.294" width="1.924" height="10.212" fill="#5B93D0" transform="rotate(45 6.2 6.4)"/><rect x="5.238" y="1.294" width="1.924" height="10.212" fill="#5B93D0" transform="rotate(90 6.2 6.4)"/><rect x="5.238" y="1.294" width="1.924" height="10.212" fill="#5B93D0" transform="rotate(135 6.2 6.4)"/><circle cx="6.2" cy="6.4" r="3.7" fill="#5B93D0"/><circle cx="6.2" cy="6.4" r="1.7" fill="#EFEFEF"/><rect x="12.386" y="8.818" width="2.028" height="10.764" fill="#5B93D0" transform="rotate(0 13.4 14.2)"/><rect x="12.386" y="8.818" width="2.028" height="10.764" fill="#5B93D0" transform="rotate(45 13.4 14.2)"/><rect x="12.386" y="8.818" width="2.028" height="10.764" fill="#5B93D0" transform="rotate(90 13.4 14.2)"/><rect x="12.386" y="8.818" width="2.028" height="10.764" fill="#5B93D0" transform="rotate(135 13.4 14.2)"/><circle cx="13.4" cy="14.2" r="3.9" fill="#5B93D0"/><circle cx="13.4" cy="14.2" r="1.8" fill="#EFEFEF"/></svg>
<svg class="b" style="left:248px;top:950.8px;" width="24" height="24" viewBox="0 0 24 24"><path d="M10.01 4.25 L10.29 1.23 L13.71 1.23 L13.99 4.25 L16.07 5.11 L18.41 3.18 L20.82 5.59 L18.89 7.93 L19.75 10.01 L22.77 10.29 L22.77 13.71 L19.75 13.99 L18.89 16.07 L20.82 18.41 L18.41 20.82 L16.07 18.89 L13.99 19.75 L13.71 22.77 L10.29 22.77 L10.01 19.75 L7.93 18.89 L5.59 20.82 L3.18 18.41 L5.11 16.07 L4.25 13.99 L1.23 13.71 L1.23 10.29 L4.25 10.01 L5.11 7.93 L3.18 5.59 L5.59 3.18 L7.93 5.11Z" fill="none" stroke="#333" stroke-width="1.5" stroke-linejoin="round"/><circle cx="12" cy="12" r="3.3" fill="none" stroke="#333" stroke-width="1.5"/></svg>
<div class="b" style="left:0px;top:985px;width:1918px;height:33px;background:#2B579A;"></div>
<div class="b" style="left:288px;top:120px;width:1372px;height:865px;background:#F4F4F4;"></div>
<div class="b" style="left:288px;top:120px;width:1372px;height:33px;background:#F4F4F4;"></div>
<div class="b" style="left:285px;top:120px;width:6px;height:865px;background:#F3F3F3;"></div>
<div class="b" style="left:290px;top:153px;width:1px;height:832px;background:#C8C8C8;"></div>
<div class="b" style="left:290px;top:121px;width:122px;height:33px;background:#EFEFEF;border:1px solid #DADADA;border-bottom:none;border-radius:6px 6px 0 0;"></div>
<div class="t" style="left:297.7px;top:130px;font-size:16px;color:#111;transform:scaleX(0.9206);transform-origin:0 50%;">BIZNISOFT v13</div>
<div class="b" style="left:290px;top:153px;width:1370px;height:1px;background:#DADADA;"></div>
<div class="b" style="left:411px;top:121px;width:211px;height:33px;background:#F4F4F4;border:1px solid #DADADA;border-bottom:none;border-radius:6px 6px 0 0;"></div>
<div class="b" style="left:416px;top:122px;width:201px;height:3px;background:#2B579A;"></div>
<div class="t" style="left:418.7px;top:130px;font-size:16px;color:#111;transform:scaleX(0.8869);transform-origin:0 50%;">Matični podaci lica van RO</div>
<svg class="b" style="left:599.5px;top:134px;" width="10" height="10" viewBox="0 0 10 10"><path d="M1 1 L9 9 M9 1 L1 9" stroke="#222" stroke-width="1.4"/></svg>
<div class="b" style="left:292px;top:155px;width:1365px;height:26px;background:#E9E9E9;"></div>
<div class="b" style="left:292px;top:154px;width:1365px;height:1px;background:#D6D6D6;"></div>
<div class="t" style="left:295.2px;top:159px;font-size:16px;color:#1A1A1A;transform:scaleX(0.8800);transform-origin:0 50%;letter-spacing:-0.444px;">Šifra</div>
<div class="t" style="left:380.7px;top:159px;font-size:16px;color:#1A1A1A;transform:scaleX(0.8999);transform-origin:0 50%;">J M B G</div>
<div class="t" style="left:470.7px;top:159px;font-size:16px;color:#1A1A1A;transform:scaleX(0.8800);transform-origin:0 50%;letter-spacing:-0.266px;">Prezime</div>
<div class="t" style="left:605.7px;top:159px;font-size:16px;color:#1A1A1A;transform:scaleX(0.9748);transform-origin:0 50%;">Ime</div>
<div class="t" style="left:713.7px;top:159px;font-size:16px;color:#1A1A1A;transform:scaleX(0.8951);transform-origin:0 50%;">Mesto</div>
<div class="t" style="left:817.2px;top:159px;font-size:16px;color:#1A1A1A;transform:scaleX(0.8800);transform-origin:0 50%;letter-spacing:-1.896px;">R</div>
<div class="t" style="left:844.7px;top:159px;font-size:16px;color:#1A1A1A;transform:scaleX(0.8800);transform-origin:0 50%;letter-spacing:-0.376px;">Šifra PP</div>
<div class="t" style="left:908.7px;top:159px;font-size:16px;color:#1A1A1A;transform:scaleX(0.9206);transform-origin:0 50%;">Datum pre…</div>
<div class="t" style="left:1018.7px;top:159px;font-size:16px;color:#1A1A1A;transform:scaleX(0.8820);transform-origin:0 50%;">Upo…</div>
<div class="t" style="left:1067.2px;top:159px;font-size:16px;color:#1A1A1A;transform:scaleX(0.8996);transform-origin:0 50%;">Upozorenj…</div>
<div class="t" style="left:1156.2px;top:159px;font-size:16px;color:#1A1A1A;transform:scaleX(0.9134);transform-origin:0 50%;">Napomena</div>
<div class="t" style="left:1406.7px;top:159px;font-size:16px;color:#1A1A1A;transform:scaleX(0.9181);transform-origin:0 50%;">Datum izmene</div>
<div class="t" style="left:1556.7px;top:159px;font-size:16px;color:#1A1A1A;transform:scaleX(0.9186);transform-origin:0 50%;">Operater</div>
<div class="b" style="left:292px;top:182px;width:1365px;height:24px;background:#E4E4E4;"></div>
<div class="b" style="left:292px;top:182px;width:55px;height:23px;background:#F7F7F7;"></div>
<div class="b" style="left:292px;top:206px;width:1365px;height:192px;background:#F7F7F7;"></div>
<div class="b" style="left:292px;top:181px;width:1365px;height:1px;background:#A8A8A8;"></div>
<div class="b" style="left:292px;top:205px;width:1365px;height:1px;background:#B9B9B9;"></div>
<div class="b" style="left:292px;top:229px;width:1365px;height:1px;background:#B9B9B9;"></div>
<div class="b" style="left:292px;top:253px;width:1365px;height:1px;background:#B9B9B9;"></div>
<div class="b" style="left:292px;top:277px;width:1365px;height:1px;background:#B9B9B9;"></div>
<div class="b" style="left:292px;top:301px;width:1365px;height:1px;background:#B9B9B9;"></div>
<div class="b" style="left:292px;top:325px;width:1365px;height:1px;background:#B9B9B9;"></div>
<div class="b" style="left:292px;top:349px;width:1365px;height:1px;background:#B9B9B9;"></div>
<div class="b" style="left:292px;top:373px;width:1365px;height:1px;background:#B9B9B9;"></div>
<div class="b" style="left:292px;top:397px;width:1365px;height:1px;background:#B9B9B9;"></div>
<div class="b" style="left:347px;top:155px;width:1px;height:243px;background:#B9B9B9;"></div>
<div class="b" style="left:467px;top:155px;width:1px;height:243px;background:#B9B9B9;"></div>
<div class="b" style="left:602px;top:155px;width:1px;height:243px;background:#B9B9B9;"></div>
<div class="b" style="left:710px;top:155px;width:1px;height:243px;background:#B9B9B9;"></div>
<div class="b" style="left:816px;top:155px;width:1px;height:243px;background:#B9B9B9;"></div>
<div class="b" style="left:840px;top:155px;width:1px;height:243px;background:#B9B9B9;"></div>
<div class="b" style="left:904px;top:155px;width:1px;height:243px;background:#B9B9B9;"></div>
<div class="b" style="left:1014px;top:155px;width:1px;height:243px;background:#B9B9B9;"></div>
<div class="b" style="left:1064px;top:155px;width:1px;height:243px;background:#B9B9B9;"></div>
<div class="b" style="left:1152px;top:155px;width:1px;height:243px;background:#B9B9B9;"></div>
<div class="b" style="left:1403px;top:155px;width:1px;height:243px;background:#B9B9B9;"></div>
<div class="b" style="left:1553px;top:155px;width:1px;height:243px;background:#B9B9B9;"></div>
<div class="b" style="left:1656px;top:155px;width:1px;height:243px;background:#B9B9B9;"></div>
<div class="b" style="left:348px;top:182px;width:254px;height:24px;background:#E2E2E2;"></div>
<div class="b" style="left:351px;top:206px;width:248px;height:190px;background:#E2E2E2;"></div>
<div class="b" style="left:711px;top:182px;width:105px;height:24px;background:#E2E2E2;"></div>
<div class="b" style="left:713px;top:206px;width:102px;height:190px;background:#E2E2E2;"></div>
<svg class="b" style="left:997px;top:159.5px;" width="14" height="13" viewBox="0 0 14 13"><path d="M0.8 0.8 H13.2 L8.4 6.4 V12 L5.6 10.2 V6.4Z" fill="none" stroke="#3563B0" stroke-width="1.3" stroke-linejoin="round"/></svg>
<div class="t" style="left:302.7px;top:184px;font-size:15.5px;color:#111;transform:scaleX(0.9164);transform-origin:0 50%;">00008</div>
<div class="t" style="left:606.7px;top:184px;font-size:15.5px;color:#111;transform:scaleX(0.8800);transform-origin:0 50%;letter-spacing:-0.763px;">ZORICA</div>
<div class="t" style="left:845.7px;top:184px;font-size:15.5px;color:#111;transform:scaleX(0.8800);transform-origin:0 50%;letter-spacing:-0.098px;">05</div>
<div class="t" style="left:910.7px;top:184px;font-size:15.5px;color:#111;transform:scaleX(0.9023);transform-origin:0 50%;">15.02.2025</div>
<div class="b" style="left:1029.5px;top:183.7px;width:20px;height:20px;background:#2B579A;border-radius:4px;"></div>
<svg class="b" style="left:1033px;top:188.7px;" width="13" height="11" viewBox="0 0 13 11"><path d="M1 5.8 L4.8 9.4 L12 1.2" fill="none" stroke="#fff" stroke-width="1.5"/></svg>
<div class="t" style="left:1068.7px;top:184px;font-size:15.5px;color:#111;transform:scaleX(0.8800);transform-origin:0 50%;letter-spacing:-1.114px;">DEMO</div>
<div class="t" style="left:1157.2px;top:184px;font-size:15.5px;color:#111;transform:scaleX(0.8800);transform-origin:0 50%;letter-spacing:-0.824px;">ISTEK UGOVORA</div>
<div class="t" style="left:1407.7px;top:184px;font-size:15.5px;color:#111;transform:scaleX(0.9418);transform-origin:0 50%;">08.02.25 17:15:47</div>
<div class="t" style="left:1557.7px;top:184px;font-size:15.5px;color:#111;transform:scaleX(0.8800);transform-origin:0 50%;letter-spacing:-0.830px;">DEMO</div>
<div class="t" style="left:302.7px;top:208px;font-size:15.5px;color:#111;transform:scaleX(0.9164);transform-origin:0 50%;">00004</div>
<div class="t" style="left:606.7px;top:208px;font-size:15.5px;color:#111;transform:scaleX(0.8800);transform-origin:0 50%;letter-spacing:-0.953px;">MIRJANA</div>
<div class="t" style="left:845.7px;top:208px;font-size:15.5px;color:#111;transform:scaleX(0.8800);transform-origin:0 50%;letter-spacing:-0.098px;">01</div>
<div class="t" style="left:910.7px;top:208px;font-size:15.5px;color:#111;transform:scaleX(0.9023);transform-origin:0 50%;">10.02.2025</div>
<div class="b" style="left:1029.5px;top:207.7px;width:20px;height:20px;background:#2B579A;border-radius:4px;"></div>
<svg class="b" style="left:1033px;top:212.7px;" width="13" height="11" viewBox="0 0 13 11"><path d="M1 5.8 L4.8 9.4 L12 1.2" fill="none" stroke="#fff" stroke-width="1.5"/></svg>
<div class="t" style="left:1068.7px;top:208px;font-size:15.5px;color:#111;transform:scaleX(0.8800);transform-origin:0 50%;letter-spacing:-1.114px;">DEMO</div>
<div class="t" style="left:1157.2px;top:208px;font-size:15.5px;color:#111;transform:scaleX(0.8800);transform-origin:0 50%;letter-spacing:-0.824px;">ISTEK UGOVORA</div>
<div class="t" style="left:1407.7px;top:208px;font-size:15.5px;color:#111;transform:scaleX(0.9418);transform-origin:0 50%;">08.02.25 17:19:24</div>
<div class="t" style="left:1557.7px;top:208px;font-size:15.5px;color:#111;transform:scaleX(0.8800);transform-origin:0 50%;letter-spacing:-0.830px;">DEMO</div>
<div class="t" style="left:302.7px;top:232px;font-size:15.5px;color:#111;transform:scaleX(0.9164);transform-origin:0 50%;">00005</div>
<div class="t" style="left:606.7px;top:232px;font-size:15.5px;color:#111;transform:scaleX(0.8800);transform-origin:0 50%;letter-spacing:-0.848px;">VLADA</div>
<div class="t" style="left:845.7px;top:232px;font-size:15.5px;color:#111;transform:scaleX(0.9322);transform-origin:0 50%;">11</div>
<div class="b" style="left:1030px;top:232px;width:19.5px;height:19.5px;background:#F5F5F5;border:1px solid #DCDCDC;border-radius:4px;"></div>
<div class="t" style="left:302.7px;top:256px;font-size:15.5px;color:#111;transform:scaleX(0.9164);transform-origin:0 50%;">00007</div>
<div class="t" style="left:606.7px;top:256px;font-size:15.5px;color:#111;transform:scaleX(0.8800);transform-origin:0 50%;letter-spacing:-1.777px;">DUŠANKA</div>
<div class="t" style="left:845.7px;top:256px;font-size:15.5px;color:#111;transform:scaleX(0.8800);transform-origin:0 50%;letter-spacing:-0.098px;">05</div>
<div class="b" style="left:1030px;top:256px;width:19.5px;height:19.5px;background:#F5F5F5;border:1px solid #DCDCDC;border-radius:4px;"></div>
<div class="t" style="left:302.7px;top:280px;font-size:15.5px;color:#111;transform:scaleX(0.9164);transform-origin:0 50%;">00010</div>
<div class="t" style="left:606.7px;top:280px;font-size:15.5px;color:#111;transform:scaleX(0.8800);transform-origin:0 50%;letter-spacing:-0.525px;">ŽIVOSLAV</div>
<div class="t" style="left:845.7px;top:280px;font-size:15.5px;color:#111;transform:scaleX(0.9322);transform-origin:0 50%;">11</div>
<div class="b" style="left:1030px;top:280px;width:19.5px;height:19.5px;background:#F5F5F5;border:1px solid #DCDCDC;border-radius:4px;"></div>
<div class="t" style="left:302.7px;top:304px;font-size:15.5px;color:#111;transform:scaleX(0.9164);transform-origin:0 50%;">00009</div>
<div class="t" style="left:606.7px;top:304px;font-size:15.5px;color:#111;transform:scaleX(0.8800);transform-origin:0 50%;letter-spacing:-1.050px;">ŽELJKO</div>
<div class="t" style="left:845.7px;top:304px;font-size:15.5px;color:#111;transform:scaleX(0.8800);transform-origin:0 50%;letter-spacing:-0.098px;">01</div>
<div class="b" style="left:1030px;top:304px;width:19.5px;height:19.5px;background:#F5F5F5;border:1px solid #DCDCDC;border-radius:4px;"></div>
<div class="t" style="left:302.7px;top:328px;font-size:15.5px;color:#111;transform:scaleX(0.9164);transform-origin:0 50%;">00006</div>
<div class="t" style="left:606.7px;top:328px;font-size:15.5px;color:#111;transform:scaleX(0.8800);transform-origin:0 50%;letter-spacing:-1.147px;">STEFAN</div>
<div class="t" style="left:845.7px;top:328px;font-size:15.5px;color:#111;transform:scaleX(0.9322);transform-origin:0 50%;">11</div>
<div class="b" style="left:1030px;top:328px;width:19.5px;height:19.5px;background:#F5F5F5;border:1px solid #DCDCDC;border-radius:4px;"></div>
<div class="t" style="left:302.7px;top:352px;font-size:15.5px;color:#111;transform:scaleX(0.9164);transform-origin:0 50%;">00002</div>
<div class="t" style="left:606.7px;top:352px;font-size:15.5px;color:#111;transform:scaleX(0.8800);transform-origin:0 50%;letter-spacing:-1.191px;">ZORAN</div>
<div class="t" style="left:845.7px;top:352px;font-size:15.5px;color:#111;transform:scaleX(0.9322);transform-origin:0 50%;">11</div>
<div class="b" style="left:1030px;top:352px;width:19.5px;height:19.5px;background:#F5F5F5;border:1px solid #DCDCDC;border-radius:4px;"></div>
<div class="t" style="left:302.7px;top:376px;font-size:15.5px;color:#111;transform:scaleX(0.9164);transform-origin:0 50%;">00003</div>
<div class="t" style="left:606.7px;top:376px;font-size:15.5px;color:#111;transform:scaleX(0.8800);transform-origin:0 50%;letter-spacing:-1.191px;">ZORAN</div>
<div class="t" style="left:845.7px;top:376px;font-size:15.5px;color:#111;transform:scaleX(0.9322);transform-origin:0 50%;">11</div>
<div class="b" style="left:1030px;top:376px;width:19.5px;height:19.5px;background:#F5F5F5;border:1px solid #DCDCDC;border-radius:4px;"></div>
<div class="b" style="left:903px;top:177px;width:252px;height:59px;border:5px solid #ED1C24;"></div>
<div class="b" style="left:1657px;top:120px;width:261px;height:865px;background:#EFEFEF;"></div>
<div class="b" style="left:1657px;top:120px;width:261px;height:33px;background:#F4F4F4;"></div>
<div class="b" style="left:1657px;top:153px;width:1px;height:832px;background:#C4C4C4;"></div>
<div class="b" style="left:1658px;top:153px;width:2px;height:832px;background:#F2F2F2;"></div>
<div class="b" style="left:1660px;top:121px;width:56px;height:33px;background:#F7F7F7;border:1px solid #DADADA;border-bottom:none;border-radius:6px 6px 0 0;"></div>
<div class="b" style="left:1664px;top:122px;width:48px;height:3px;background:#2B579A;"></div>
<div class="t" style="left:1667.7px;top:129px;font-size:16px;color:#111;transform:scaleX(0.8800);transform-origin:0 50%;letter-spacing:-0.360px;">Planer</div>
<div class="b" style="left:1715.5px;top:121px;width:87px;height:33px;background:#EFEFEF;border:1px solid #DADADA;border-bottom:none;border-radius:6px 6px 0 0;"></div>
<div class="t" style="left:1723.4px;top:129px;font-size:16px;color:#111;transform:scaleX(0.9300);transform-origin:0 50%;">Za štampu</div>
<div class="b" style="left:1802px;top:121px;width:68px;height:33px;background:#EFEFEF;border:1px solid #DADADA;border-bottom:none;border-radius:6px 6px 0 0;"></div>
<div class="t" style="left:1810.7px;top:129px;font-size:16px;color:#111;transform:scaleX(0.9696);transform-origin:0 50%;">Tajmeri</div>
<div class="b" style="left:1715px;top:153px;width:203px;height:1px;background:#DADADA;"></div>
<div class="b" style="left:1660px;top:153px;width:38px;height:832px;background:#F7F7F7;"></div>
<div class="b" style="left:1698px;top:154px;width:200px;height:46px;background:#F0F0F0;"></div>
<div class="t" style="left:1707.2px;top:168px;font-size:15.5px;color:#111;transform:scaleX(0.9644);transform-origin:0 50%;font-weight:bold;">NEDELJA, 09. FEBRUAR</div>
<div class="b" style="left:1698px;top:200px;width:199.5px;height:785px;background:#D9D9D9;"></div>
<div class="b" style="left:1669px;top:200px;width:229px;height:1px;background:#BDBDBD;"></div>
<div class="b" style="left:1698px;top:227px;width:199px;height:1px;background-image:repeating-linear-gradient(to right,#BFBFBF 0 1px,transparent 1px 3px);"></div>
<div class="b" style="left:1669px;top:254px;width:229px;height:1px;background:#BDBDBD;"></div>
<div class="b" style="left:1698px;top:281px;width:199px;height:1px;background-image:repeating-linear-gradient(to right,#BFBFBF 0 1px,transparent 1px 3px);"></div>
<div class="b" style="left:1669px;top:308px;width:229px;height:1px;background:#BDBDBD;"></div>
<div class="b" style="left:1698px;top:335px;width:199px;height:1px;background-image:repeating-linear-gradient(to right,#BFBFBF 0 1px,transparent 1px 3px);"></div>
<div class="b" style="left:1669px;top:362px;width:229px;height:1px;background:#BDBDBD;"></div>
<div class="b" style="left:1698px;top:389px;width:199px;height:1px;background-image:repeating-linear-gradient(to right,#BFBFBF 0 1px,transparent 1px 3px);"></div>
<div class="b" style="left:1669px;top:416px;width:229px;height:1px;background:#BDBDBD;"></div>
<div class="b" style="left:1698px;top:443px;width:199px;height:1px;background-image:repeating-linear-gradient(to right,#BFBFBF 0 1px,transparent 1px 3px);"></div>
<div class="b" style="left:1669px;top:470px;width:229px;height:1px;background:#BDBDBD;"></div>
<div class="b" style="left:1698px;top:497px;width:199px;height:1px;background-image:repeating-linear-gradient(to right,#BFBFBF 0 1px,transparent 1px 3px);"></div>
<div class="b" style="left:1669px;top:524px;width:229px;height:1px;background:#BDBDBD;"></div>
<div class="b" style="left:1698px;top:551px;width:199px;height:1px;background-image:repeating-linear-gradient(to right,#BFBFBF 0 1px,transparent 1px 3px);"></div>
<div class="b" style="left:1669px;top:578px;width:229px;height:1px;background:#BDBDBD;"></div>
<div class="b" style="left:1698px;top:605px;width:199px;height:1px;background-image:repeating-linear-gradient(to right,#BFBFBF 0 1px,transparent 1px 3px);"></div>
<div class="b" style="left:1669px;top:632px;width:229px;height:1px;background:#BDBDBD;"></div>
<div class="b" style="left:1698px;top:659px;width:199px;height:1px;background-image:repeating-linear-gradient(to right,#BFBFBF 0 1px,transparent 1px 3px);"></div>
<div class="b" style="left:1669px;top:686px;width:229px;height:1px;background:#BDBDBD;"></div>
<div class="b" style="left:1698px;top:713px;width:199px;height:1px;background-image:repeating-linear-gradient(to right,#BFBFBF 0 1px,transparent 1px 3px);"></div>
<div class="b" style="left:1669px;top:740px;width:229px;height:1px;background:#BDBDBD;"></div>
<div class="b" style="left:1698px;top:767px;width:199px;height:1px;background-image:repeating-linear-gradient(to right,#BFBFBF 0 1px,transparent 1px 3px);"></div>
<div class="b" style="left:1669px;top:794px;width:229px;height:1px;background:#BDBDBD;"></div>
<div class="b" style="left:1698px;top:821px;width:199px;height:1px;background-image:repeating-linear-gradient(to right,#BFBFBF 0 1px,transparent 1px 3px);"></div>
<div class="b" style="left:1669px;top:848px;width:229px;height:1px;background:#BDBDBD;"></div>
<div class="b" style="left:1698px;top:875px;width:199px;height:1px;background-image:repeating-linear-gradient(to right,#BFBFBF 0 1px,transparent 1px 3px);"></div>
<div class="b" style="left:1669px;top:902px;width:229px;height:1px;background:#BDBDBD;"></div>
<div class="b" style="left:1698px;top:929px;width:199px;height:1px;background-image:repeating-linear-gradient(to right,#BFBFBF 0 1px,transparent 1px 3px);"></div>
<div class="b" style="left:1669px;top:956px;width:229px;height:1px;background:#BDBDBD;"></div>
<div class="b" style="left:1698px;top:983px;width:199px;height:1px;background-image:repeating-linear-gradient(to right,#BFBFBF 0 1px,transparent 1px 3px);"></div>
<div class="t" style="left:1670.4px;top:205px;font-size:16px;color:#111;transform:scaleX(0.9159);transform-origin:0 50%;">04</div>
<div class="t" style="left:1670.4px;top:907px;font-size:16px;color:#111;transform:scaleX(0.9159);transform-origin:0 50%;">17</div>
<div class="t" style="left:1670.4px;top:961px;font-size:16px;color:#111;transform:scaleX(0.9159);transform-origin:0 50%;">18</div>
<div class="t" style="left:1670.4px;top:853px;font-size:16px;color:#111;transform:scaleX(0.9159);transform-origin:0 50%;">16</div>
<div class="b" style="left:1780px;top:524.4px;width:112px;height:39.2px;background:#C6C6C6;border:3px solid #050505;"></div>
<div class="t" style="left:1826.3px;top:528px;font-size:16px;color:#0A0A0A;letter-spacing:0.011px;font-weight:bold;">ra Biz...</div>
<div class="b" style="left:1783px;top:549px;width:105px;height:1px;background:#A8A8A8;"></div>
<div class="b" style="left:1783px;top:550px;width:105px;height:10.5px;overflow:hidden;"><div class="t" style="left:44px;top:0px;font-size:15px;color:#111;letter-spacing:-0.3px;">e RO 8</div></div>
<svg class="b" style="left:1903px;top:160px;" width="9" height="7" viewBox="0 0 9 7"><path d="M4.5 0 L9 7 H0Z" fill="#A8A8A8"/></svg>
<div class="b" style="left:1904px;top:305.5px;width:8.5px;height:475.5px;background:#9B9B9B;border-radius:4.5px;"></div>
<svg class="b" style="left:1903px;top:969px;" width="9" height="7" viewBox="0 0 9 7"><path d="M0 0 H9 L4.5 7Z" fill="#A8A8A8"/></svg>
<svg class="b" style="left:299px;top:595.5px;" width="15" height="11" viewBox="0 0 15 11"><path d="M0.8 0.5 V10.5 M8 0.5 L3.4 5.5 L8 10.5 M14 0.5 L9.4 5.5 L14 10.5" fill="none" stroke="#8A8A8A" stroke-width="1.3" stroke-linecap="round" stroke-linejoin="round"/></svg>
<svg class="b" style="left:331px;top:595.5px;" width="12" height="11" viewBox="0 0 12 11"><path d="M5.4 0.5 L0.8 5.5 L5.4 10.5 M11.2 0.5 L6.6 5.5 L11.2 10.5" fill="none" stroke="#8A8A8A" stroke-width="1.3" stroke-linecap="round" stroke-linejoin="round"/></svg>
<svg class="b" style="left:363.5px;top:595.5px;" width="7" height="11" viewBox="0 0 7 11"><path d="M6 0.5 L1 5.5 L6 10.5" fill="none" stroke="#8A8A8A" stroke-width="1.3" stroke-linecap="round" stroke-linejoin="round"/></svg>
<div class="t" style="left:390.2px;top:592px;font-size:16px;color:#111;transform:scaleX(0.9329);transform-origin:0 50%;">1 od 9</div>
<svg class="b" style="left:451.5px;top:595.5px;" width="7" height="11" viewBox="0 0 7 11"><path d="M1 0.5 L6 5.5 L1 10.5" fill="none" stroke="#222" stroke-width="1.4" stroke-linecap="round" stroke-linejoin="round"/></svg>
<svg class="b" style="left:479px;top:595.5px;" width="12" height="11" viewBox="0 0 12 11"><path d="M0.8 0.5 L5.4 5.5 L0.8 10.5 M6.6 0.5 L11.2 5.5 L6.6 10.5" fill="none" stroke="#222" stroke-width="1.3" stroke-linecap="round" stroke-linejoin="round"/></svg>
<svg class="b" style="left:507.5px;top:595.5px;" width="15" height="11" viewBox="0 0 15 11"><path d="M1 0.5 L5.6 5.5 L1 10.5 M7 0.5 L11.6 5.5 L7 10.5 M14.2 0.5 V10.5" fill="none" stroke="#222" stroke-width="1.3" stroke-linecap="round" stroke-linejoin="round"/></svg>
<svg class="b" style="left:539px;top:595.5px;" width="11" height="11" viewBox="0 0 11 11"><path d="M5.5 0.8 V10.2 M0.8 5.5 H10.2" fill="none" stroke="#333" stroke-width="1.9" stroke-linecap="round" stroke-linejoin="round"/></svg>
<svg class="b" style="left:569px;top:599.5px;" width="11" height="3" viewBox="0 0 11 3"><path d="M0.5 1.5 H10.5" fill="none" stroke="#666" stroke-width="2" stroke-linecap="round" stroke-linejoin="round"/></svg>
<svg class="b" style="left:599px;top:594.5px;" width="13" height="13" viewBox="0 0 13 13"><path d="M9 1 L12 4 L4.6 11.4 L1 12 L1.6 8.4Z M7.6 2.6 L10.4 5.4" fill="none" stroke="#777" stroke-width="1.2" stroke-linecap="round" stroke-linejoin="round"/></svg>
<svg class="b" style="left:628px;top:595.5px;" width="14" height="11" viewBox="0 0 14 11"><path d="M1 6 L4.8 9.8 L13 1" fill="none" stroke="#8A8A8A" stroke-width="1.3" stroke-linecap="round" stroke-linejoin="round"/></svg>
<svg class="b" style="left:659.5px;top:595.5px;" width="11" height="11" viewBox="0 0 11 11"><path d="M0.8 0.8 L10.2 10.2 M10.2 0.8 L0.8 10.2" fill="none" stroke="#666" stroke-width="1.3" stroke-linecap="round" stroke-linejoin="round"/></svg>
<svg class="b" style="left:687.5px;top:595.5px;" width="14" height="11" viewBox="0 0 14 11"><path d="M9 1 L13 4.8 L9 8.6 M13 4.8 H4.4 Q1 4.8 1 8 Q1 10.4 3.4 10.4" fill="none" stroke="#222" stroke-width="1.4" stroke-linecap="round" stroke-linejoin="round"/></svg>
<svg class="b" style="left:718px;top:595px;" width="12" height="12" viewBox="0 0 12 12"><path d="M6 6 L11.6 6 M6 6 L9.9598 9.9598 M6 6 L6.00001 11.6 M6 6 L2.04021 9.95981 M6 6 L0.4 6.00001 M6 6 L2.04019 2.04022 M6 6 L5.99998 0.4 M6 6 L9.95978 2.04018 " fill="none" stroke="#222" stroke-width="1.4" stroke-linecap="round" stroke-linejoin="round"/></svg>
<svg class="b" style="left:745.5px;top:593px;" width="15" height="16" viewBox="0 0 15 16"><path d="M0.6 0.6 L4.6 3.6 L0.6 6.4Z" fill="#777"/><path d="M6 6 L11.6 6 M6 6 L9.9598 9.9598 M6 6 L6.00001 11.6 M6 6 L2.04021 9.95981 M6 6 L0.4 6.00001 M6 6 L2.04019 2.04022 M6 6 L5.99998 0.4 M6 6 L9.95978 2.04018 " transform="translate(3.4,4) scale(0.92)" fill="none" stroke="#666" stroke-width="1.2" stroke-linecap="round"/></svg>
<svg class="b" style="left:777.5px;top:594px;" width="17" height="15" viewBox="0 0 17 15"><path d="M0.8 0.8 H16.2 L10.4 7.4 V14 L6.6 11.8 V7.4Z" fill="none" stroke="#222" stroke-width="1.4" stroke-linejoin="round"/></svg>
<div class="b" style="left:813px;top:589px;width:844px;height:24.5px;background:#EDEDED;"></div>
<svg class="b" style="left:818.6px;top:597px;" width="8" height="8" viewBox="0 0 8 8"><path d="M7.6 0 V8 L0 4Z" fill="#A8A8A8"/></svg>
<div class="b" style="left:1238px;top:595.5px;width:60px;height:11.5px;background:#9B9B9B;border-radius:6px;"></div>
<div class="b" style="left:292.5px;top:617px;width:129.5px;height:28px;background:#F4F4F4;border:1px solid #DADADA;border-bottom:none;border-radius:6px 6px 0 0;"></div>
<div class="b" style="left:297px;top:617px;width:120px;height:3px;background:#2B579A;"></div>
<div class="t" style="left:300.2px;top:623px;font-size:16px;color:#111;transform:scaleX(0.8827);transform-origin:0 50%;">Pregled obračuna</div>
<div class="b" style="left:421px;top:617px;width:170.5px;height:28px;background:#EFEFEF;border:1px solid #DADADA;border-bottom:none;border-radius:6px 6px 0 0;"></div>
<div class="t" style="left:428.7px;top:623px;font-size:16px;color:#111;transform:scaleX(0.8855);transform-origin:0 50%;">Ugovoreni iznosi zarada</div>
<div class="b" style="left:590.5px;top:617px;width:74.5px;height:28px;background:#EFEFEF;border:1px solid #DADADA;border-bottom:none;border-radius:6px 6px 0 0;"></div>
<div class="t" style="left:598.7px;top:623px;font-size:16px;color:#111;transform:scaleX(0.9025);transform-origin:0 50%;">Događaji</div>
<div class="b" style="left:664px;top:617px;width:97px;height:28px;background:#EFEFEF;border:1px solid #DADADA;border-bottom:none;border-radius:6px 6px 0 0;"></div>
<div class="t" style="left:672.7px;top:623px;font-size:16px;color:#111;transform:scaleX(0.8800);transform-origin:0 50%;letter-spacing:-0.004px;">Polja po želji</div>
<div class="b" style="left:421px;top:644px;width:1236px;height:1px;background:#DADADA;"></div>
<div class="b" style="left:292px;top:645px;width:1365px;height:26px;background:#E9E9E9;"></div>
<div class="b" style="left:292px;top:671px;width:1365px;height:1px;background:#A8A8A8;"></div>
<div class="b" style="left:347px;top:645px;width:1px;height:26px;background:#A0A0A0;"></div>
<div class="b" style="left:432px;top:645px;width:1px;height:26px;background:#A0A0A0;"></div>
<div class="b" style="left:632px;top:645px;width:1px;height:26px;background:#A0A0A0;"></div>
<div class="b" style="left:670px;top:645px;width:1px;height:26px;background:#A0A0A0;"></div>
<div class="b" style="left:720px;top:645px;width:1px;height:26px;background:#A0A0A0;"></div>
<div class="b" style="left:1013px;top:645px;width:1px;height:26px;background:#A0A0A0;"></div>
<div class="b" style="left:1174px;top:645px;width:1px;height:26px;background:#A0A0A0;"></div>
<div class="t" style="left:295.7px;top:650px;font-size:16px;color:#1A1A1A;transform:scaleX(0.8869);transform-origin:0 50%;">Rbr …</div>
<div class="t" style="left:350.7px;top:650px;font-size:16px;color:#1A1A1A;transform:scaleX(0.9231);transform-origin:0 50%;">Datum</div>
<div class="t" style="left:436.7px;top:650px;font-size:16px;color:#1A1A1A;transform:scaleX(0.8841);transform-origin:0 50%;">Opis obračuna</div>
<div class="t" style="left:636.7px;top:650px;font-size:16px;color:#1A1A1A;transform:scaleX(0.8800);transform-origin:0 50%;letter-spacing:-0.640px;">Rbr</div>
<div class="t" style="left:674.2px;top:650px;font-size:16px;color:#1A1A1A;transform:scaleX(0.9236);transform-origin:0 50%;">Vrst…</div>
<div class="t" style="left:723.7px;top:650px;font-size:16px;color:#1A1A1A;transform:scaleX(0.8818);transform-origin:0 50%;">Opis prihoda</div>
<div class="t" style="left:1017.1px;top:650px;font-size:16px;color:#1A1A1A;transform:scaleX(0.8800);transform-origin:0 50%;letter-spacing:-0.019px;">Opis plaćanja</div>
<div class="t" style="left:1178.1px;top:650px;font-size:16px;color:#1A1A1A;transform:scaleX(0.9158);transform-origin:0 50%;">Br.Ugovora</div>
<div class="t" style="left:888.7px;top:772px;font-size:14.5px;color:#111;transform:scaleX(0.9374);transform-origin:0 50%;">&lt;Nema podataka za prikaz&gt;</div>
<div class="b" style="left:292px;top:891px;width:1365px;height:1px;background:#DDDDDD;"></div>
<div class="b" style="left:292px;top:892px;width:1365px;height:25px;background:#FAFAFA;"></div>
<div class="b" style="left:292px;top:917px;width:1365px;height:27px;background:#F2F2F2;"></div>
<svg class="b" style="left:300px;top:925px;" width="15" height="11" viewBox="0 0 15 11"><path d="M0.8 0.5 V10.5 M8 0.5 L3.4 5.5 L8 10.5 M14 0.5 L9.4 5.5 L14 10.5" fill="none" stroke="#8A8A8A" stroke-width="1.3" stroke-linecap="round" stroke-linejoin="round"/></svg>
<svg class="b" style="left:332px;top:925px;" width="12" height="11" viewBox="0 0 12 11"><path d="M5.4 0.5 L0.8 5.5 L5.4 10.5 M11.2 0.5 L6.6 5.5 L11.2 10.5" fill="none" stroke="#8A8A8A" stroke-width="1.3" stroke-linecap="round" stroke-linejoin="round"/></svg>
<svg class="b" style="left:364.5px;top:925px;" width="7" height="11" viewBox="0 0 7 11"><path d="M6 0.5 L1 5.5 L6 10.5" fill="none" stroke="#8A8A8A" stroke-width="1.3" stroke-linecap="round" stroke-linejoin="round"/></svg>
<div class="t" style="left:390.7px;top:922px;font-size:16px;color:#111;transform:scaleX(0.9441);transform-origin:0 50%;">0 od 0</div>
<svg class="b" style="left:452.5px;top:925px;" width="7" height="11" viewBox="0 0 7 11"><path d="M1 0.5 L6 5.5 L1 10.5" fill="none" stroke="#8A8A8A" stroke-width="1.4" stroke-linecap="round" stroke-linejoin="round"/></svg>
<svg class="b" style="left:480px;top:925px;" width="12" height="11" viewBox="0 0 12 11"><path d="M0.8 0.5 L5.4 5.5 L0.8 10.5 M6.6 0.5 L11.2 5.5 L6.6 10.5" fill="none" stroke="#8A8A8A" stroke-width="1.3" stroke-linecap="round" stroke-linejoin="round"/></svg>
<svg class="b" style="left:508.5px;top:925px;" width="15" height="11" viewBox="0 0 15 11"><path d="M1 0.5 L5.6 5.5 L1 10.5 M7 0.5 L11.6 5.5 L7 10.5 M14.2 0.5 V10.5" fill="none" stroke="#8A8A8A" stroke-width="1.3" stroke-linecap="round" stroke-linejoin="round"/></svg>
<svg class="b" style="left:540px;top:925px;" width="11" height="11" viewBox="0 0 11 11"><path d="M5.5 0.8 V10.2 M0.8 5.5 H10.2" fill="none" stroke="#333" stroke-width="1.9" stroke-linecap="round" stroke-linejoin="round"/></svg>
<svg class="b" style="left:570px;top:929px;" width="11" height="3" viewBox="0 0 11 3"><path d="M0.5 1.5 H10.5" fill="none" stroke="#333" stroke-width="2" stroke-linecap="round" stroke-linejoin="round"/></svg>
<svg class="b" style="left:600px;top:924px;" width="13" height="13" viewBox="0 0 13 13"><path d="M9 1 L12 4 L4.6 11.4 L1 12 L1.6 8.4Z M7.6 2.6 L10.4 5.4" fill="none" stroke="#777" stroke-width="1.2" stroke-linecap="round" stroke-linejoin="round"/></svg>
<svg class="b" style="left:629px;top:925px;" width="14" height="11" viewBox="0 0 14 11"><path d="M1 6 L4.8 9.8 L13 1" fill="none" stroke="#8A8A8A" stroke-width="1.3" stroke-linecap="round" stroke-linejoin="round"/></svg>
<svg class="b" style="left:660.5px;top:925px;" width="11" height="11" viewBox="0 0 11 11"><path d="M0.8 0.8 L10.2 10.2 M10.2 0.8 L0.8 10.2" fill="none" stroke="#444" stroke-width="1.3" stroke-linecap="round" stroke-linejoin="round"/></svg>
<svg class="b" style="left:688.5px;top:925px;" width="14" height="11" viewBox="0 0 14 11"><path d="M9 1 L13 4.8 L9 8.6 M13 4.8 H4.4 Q1 4.8 1 8 Q1 10.4 3.4 10.4" fill="none" stroke="#222" stroke-width="1.4" stroke-linecap="round" stroke-linejoin="round"/></svg>
<svg class="b" style="left:719px;top:924.5px;" width="12" height="12" viewBox="0 0 12 12"><path d="M6 6 L11.6 6 M6 6 L9.9598 9.9598 M6 6 L6.00001 11.6 M6 6 L2.04021 9.95981 M6 6 L0.4 6.00001 M6 6 L2.04019 2.04022 M6 6 L5.99998 0.4 M6 6 L9.95978 2.04018 " fill="none" stroke="#222" stroke-width="1.4" stroke-linecap="round" stroke-linejoin="round"/></svg>
<svg class="b" style="left:746.5px;top:922.5px;" width="15" height="16" viewBox="0 0 15 16"><path d="M0.6 0.6 L4.6 3.6 L0.6 6.4Z" fill="#777"/><path d="M6 6 L11.6 6 M6 6 L9.9598 9.9598 M6 6 L6.00001 11.6 M6 6 L2.04021 9.95981 M6 6 L0.4 6.00001 M6 6 L2.04019 2.04022 M6 6 L5.99998 0.4 M6 6 L9.95978 2.04018 " transform="translate(3.4,4) scale(0.92)" fill="none" stroke="#666" stroke-width="1.2" stroke-linecap="round"/></svg>
<svg class="b" style="left:778.5px;top:923.5px;" width="17" height="15" viewBox="0 0 17 15"><path d="M0.8 0.8 H16.2 L10.4 7.4 V14 L6.6 11.8 V7.4Z" fill="none" stroke="#222" stroke-width="1.4" stroke-linejoin="round"/></svg>
<div class="b" style="left:814px;top:919px;width:844px;height:24px;background:#EDEDED;"></div>
<svg class="b" style="left:819.5px;top:926.5px;" width="8" height="8" viewBox="0 0 8 8"><path d="M7.6 0 V8 L0 4Z" fill="#A8A8A8"/></svg>
<div class="b" style="left:835px;top:925px;width:310px;height:12px;background:#9B9B9B;border-radius:6px;"></div>
<svg class="b" style="left:1641px;top:926.5px;" width="8" height="8" viewBox="0 0 8 8"><path d="M0 0 V8 L7.6 4Z" fill="#A8A8A8"/></svg>
<div class="b" style="left:288px;top:945px;width:1372px;height:40px;background:#EFEFEF;"></div>
<div class="b" style="left:290px;top:944px;width:1368px;height:1px;background:#C6C6C6;"></div>
<div class="b" style="left:289.3px;top:153px;width:1.2px;height:832px;background:#CECECE;"></div>
<div class="b" style="left:290px;top:984px;width:1368px;height:1px;background:#C8C8C8;"></div>
<div class="b" style="left:293.3px;top:954px;width:19.5px;height:19.5px;background:#F7F7F7;border:1px solid #D4D4D4;border-radius:4px;"></div>
<div class="t" style="left:318.7px;top:956px;font-size:16px;color:#111;transform:scaleX(0.8860);transform-origin:0 50%;">F2 - IZMENE</div>
<div class="b" style="left:417px;top:949px;width:1px;height:32px;background:#D0D0D0;"></div>
<div class="b" style="left:421.3px;top:954px;width:19.5px;height:19.5px;background:#F7F7F7;border:1px solid #D4D4D4;border-radius:4px;"></div>
<div class="t" style="left:446.7px;top:956px;font-size:16px;color:#111;transform:scaleX(0.8800);transform-origin:0 50%;letter-spacing:-0.007px;">F3 - PRIKAŽI SVE</div>
<div class="b" style="left:575px;top:949px;width:1px;height:32px;background:#D0D0D0;"></div>
<div class="t" style="left:586.7px;top:956px;font-size:16px;color:#111;transform:scaleX(0.9122);transform-origin:0 50%;">PRETRAGA ( Ctrl+f ), F1 - PO ŠIFRI, F7 - PO NAZIVU</div>
<div class="b" style="left:953px;top:949px;width:1px;height:32px;background:#D0D0D0;"></div>
<div class="b" style="left:1312px;top:949px;width:1px;height:32px;background:#D0D0D0;"></div>
<div class="b" style="left:1317px;top:950px;width:121px;height:30.5px;background:#FAFAFA;border:1px solid #E2E2E2;border-bottom-color:#CFCFCF;border-radius:4px;"></div>
<div class="t" style="left:1321.7px;top:956px;font-size:16px;color:#111;transform:scaleX(0.9975);transform-origin:0 50%;">Kreiraj partnera</div>
<div class="b" style="left:1441px;top:949px;width:1px;height:32px;background:#D0D0D0;"></div>
<div class="b" style="left:1445px;top:950px;width:102.5px;height:30.5px;background:#FAFAFA;border:1px solid #E2E2E2;border-bottom-color:#CFCFCF;border-radius:4px;"></div>
<div class="t" style="left:1464.2px;top:956px;font-size:16px;color:#111;transform:scaleX(0.9695);transform-origin:0 50%;">OK/Upiši</div>
<div class="b" style="left:1550px;top:949px;width:1px;height:32px;background:#D0D0D0;"></div>
<div class="b" style="left:1554px;top:950px;width:100.5px;height:30.5px;background:#FAFAFA;border:1px solid #E2E2E2;border-bottom-color:#CFCFCF;border-radius:4px;"></div>
<div class="t" style="left:1572.1px;top:956px;font-size:16px;color:#111;transform:scaleX(0.9666);transform-origin:0 50%;">Odustani</div>
<div class="t" style="left:1656.7px;top:994px;font-size:16px;color:#FFFFFF;transform:scaleX(0.9211);transform-origin:0 50%;">T R X</div>
<svg class="b" style="left:1724px;top:992px;" width="22" height="21" viewBox="0 0 22 21"><path d="M3 1 H19 Q21 1 21 3 V13 Q21 15 19 15 H14.4 L11.6 19.6 V15 H3 Q1 15 1 13 V3 Q1 1 3 1Z" fill="none" stroke="#fff" stroke-width="1.5" stroke-linejoin="round"/><circle cx="7.6" cy="6" r="1.2" fill="#fff"/><circle cx="14.4" cy="6" r="1.2" fill="#fff"/><path d="M7 9.4 Q11 12.2 15 9.4" fill="none" stroke="#fff" stroke-width="1.3"/></svg>
<div class="t" style="left:1756.7px;top:994px;font-size:16px;color:#9CA6AE;transform:scaleX(0.8800);transform-origin:0 50%;letter-spacing:-1.376px;">CAPS</div>
<div class="t" style="left:1801.2px;top:994px;font-size:16px;color:#0A0A14;transform:scaleX(0.8800);transform-origin:0 50%;letter-spacing:-0.593px;">NUM</div>
<div class="t" style="left:1843.3px;top:994px;font-size:16px;color:#9CA6AE;transform:scaleX(0.8800);transform-origin:0 50%;letter-spacing:-1.523px;">SCRL</div>
<div class="t" style="left:1887.7px;top:994px;font-size:16px;color:#9CA6AE;transform:scaleX(0.8998);transform-origin:0 50%;">INS</div>
<div class="b" style="left:1717px;top:986px;width:1px;height:32px;background:#274F8E;"></div>
<div class="b" style="left:1752.5px;top:986px;width:1px;height:32px;background:#274F8E;"></div>
<div class="b" style="left:1797px;top:986px;width:1px;height:32px;background:#274F8E;"></div>
<div class="b" style="left:1837.5px;top:986px;width:1px;height:32px;background:#274F8E;"></div>
<div class="b" style="left:1882px;top:986px;width:1px;height:32px;background:#274F8E;"></div>
<div class="b" style="left:1254px;top:236px;width:572.3px;height:627.5px;background:#F0F0F0;border-radius:9px;box-shadow:0 12px 30px rgba(0,0,0,0.28),0 0 8px rgba(0,0,0,0.10);border:1px solid #CFCFCF;"></div>
<div class="b" style="left:1254px;top:236px;width:572.3px;height:39.5px;background:#2B579A;border-radius:9px 9px 0 0;"></div>
<div class="t" style="left:1260.7px;top:246px;font-size:11.5px;color:#FFFFFF;transform:scaleX(0.9014);transform-origin:0 50%;font-weight:bold;">BS</div>
<div class="t" style="left:1282.1px;top:247px;font-size:16px;color:#E2EAF6;transform:scaleX(0.9342);transform-origin:0 50%;">Događaj - Poruka operatera BizniSoft</div>
<svg class="b" style="left:1663.5px;top:255px;" width="14" height="3" viewBox="0 0 14 3"><path d="M0.5 1.5 H13" stroke="#FFFFFF" stroke-width="1.4"/></svg>
<svg class="b" style="left:1727px;top:250px;" width="13" height="13" viewBox="0 0 13 13"><rect x="0.8" y="0.8" width="11" height="11" rx="1.2" fill="none" stroke="#FFFFFF" stroke-width="1.4"/></svg>
<svg class="b" style="left:1789px;top:250px;" width="14" height="14" viewBox="0 0 14 14"><path d="M0.8 0.8 L12.6 12.6 M12.6 0.8 L0.8 12.6" stroke="#FFFFFF" stroke-width="1.4"/></svg>
<div class="t" style="left:1263.7px;top:294px;font-size:15px;color:#111;transform:scaleX(0.8800);transform-origin:0 50%;letter-spacing:-0.003px;">Naslov:</div>
<div class="b" style="left:1321.3px;top:290.8px;width:495.7px;height:26px;background:#F7F7F7;border:1px solid #E6E6E6;border-bottom:1.5px solid #B8B8B8;border-radius:4px;"></div>
<div class="t" style="left:1326.3px;top:294px;font-size:15px;color:#111;transform:scaleX(0.8919);transform-origin:0 50%;">Poruka operatera BizniSoft</div>
<div class="t" style="left:1263.7px;top:326px;font-size:15px;color:#111;transform:scaleX(0.8952);transform-origin:0 50%;">Lokacija:</div>
<div class="b" style="left:1321.3px;top:322.6px;width:303.1px;height:26.2px;background:#F7F7F7;border:1px solid #E6E6E6;border-bottom:1.5px solid #B8B8B8;border-radius:4px;"></div>
<div class="t" style="left:1326.3px;top:326px;font-size:15px;color:#111;transform:scaleX(0.8800);transform-origin:0 50%;letter-spacing:-0.782px;">BEOGRAD</div>
<div class="t" style="left:1629.7px;top:327px;font-size:15px;color:#111;transform:scaleX(0.9095);transform-origin:0 50%;">Ozn.:</div>
<div class="b" style="left:1666.8px;top:321.9px;width:150.2px;height:30.5px;background:#F7F7F7;border:1px solid #E6E6E6;border-bottom:1.5px solid #ADADAD;border-radius:4px;"></div>
<div class="b" style="left:1672px;top:328px;width:19px;height:18.5px;background:#FFFFFF;border:1.5px solid #111;"></div>
<div class="t" style="left:1695.1px;top:327px;font-size:15px;color:#111;transform:scaleX(0.8800);transform-origin:0 50%;letter-spacing:-0.202px;">Bez oznake</div>
<svg class="b" style="left:1797px;top:333.8px;" width="12" height="7.4" viewBox="0 0 12 7.4"><path d="M1 1 L6 6.4 L11 1" fill="none" stroke="#222" stroke-width="1.5" stroke-linecap="round" stroke-linejoin="round"/></svg>
<div class="b" style="left:1264px;top:361px;width:552px;height:1px;background:#E2E2E2;"></div>
<div class="t" style="left:1263.7px;top:374px;font-size:15px;color:#111;transform:scaleX(0.9080);transform-origin:0 50%;">Početak:</div>
<div class="b" style="left:1321.3px;top:370.3px;width:149.7px;height:27px;background:#F7F7F7;border:1px solid #E6E6E6;border-bottom:1.5px solid #ADADAD;border-radius:4px;"></div>
<div class="t" style="left:1326.3px;top:374px;font-size:15px;color:#111;transform:scaleX(0.9447);transform-origin:0 50%;">9.2.2025.</div>
<svg class="b" style="left:1452.3px;top:379.8px;" width="12" height="7.4" viewBox="0 0 12 7.4"><path d="M1 1 L6 6.4 L11 1" fill="none" stroke="#222" stroke-width="1.5" stroke-linecap="round" stroke-linejoin="round"/></svg>
<div class="b" style="left:1477.6px;top:370.3px;width:149.6px;height:27px;background:#F7F7F7;border:1px solid #E6E6E6;border-bottom:1.5px solid #ADADAD;border-radius:4px;"></div>
<div class="t" style="left:1482.7px;top:374px;font-size:15px;color:#111;transform:scaleX(0.9484);transform-origin:0 50%;">10:00</div>
<svg class="b" style="left:1608.8px;top:373.5px;" width="12" height="20" viewBox="0 0 12 20"><path d="M1 7 L6 2 L11 7 M1 13 L6 18 L11 13" fill="none" stroke="#222" stroke-width="1.4" stroke-linecap="round" stroke-linejoin="round"/></svg>
<div class="b" style="left:1633.6px;top:373.5px;width:19.5px;height:19.5px;background:#F7F7F7;border:1px solid #D4D4D4;border-radius:4px;"></div>
<div class="t" style="left:1658.7px;top:373px;font-size:15px;color:#111;transform:scaleX(0.9414);transform-origin:0 50%;">Svakodnev.događaj</div>
<div class="t" style="left:1263.7px;top:406px;font-size:15px;color:#111;transform:scaleX(0.9175);transform-origin:0 50%;">Kraj:</div>
<div class="b" style="left:1321.3px;top:402.3px;width:149.7px;height:26.8px;background:#F7F7F7;border:1px solid #E6E6E6;border-bottom:1.5px solid #ADADAD;border-radius:4px;"></div>
<div class="t" style="left:1326.3px;top:406px;font-size:15px;color:#111;transform:scaleX(0.9447);transform-origin:0 50%;">9.2.2025.</div>
<svg class="b" style="left:1452.3px;top:411.8px;" width="12" height="7.4" viewBox="0 0 12 7.4"><path d="M1 1 L6 6.4 L11 1" fill="none" stroke="#222" stroke-width="1.5" stroke-linecap="round" stroke-linejoin="round"/></svg>
<div class="b" style="left:1477.6px;top:402.3px;width:149.6px;height:26.8px;background:#F7F7F7;border:1px solid #E6E6E6;border-bottom:1.5px solid #ADADAD;border-radius:4px;"></div>
<div class="t" style="left:1482.7px;top:406px;font-size:15px;color:#111;transform:scaleX(0.9484);transform-origin:0 50%;">10:45</div>
<svg class="b" style="left:1608.8px;top:405.5px;" width="12" height="20" viewBox="0 0 12 20"><path d="M1 7 L6 2 L11 7 M1 13 L6 18 L11 13" fill="none" stroke="#222" stroke-width="1.4" stroke-linecap="round" stroke-linejoin="round"/></svg>
<div class="b" style="left:1264px;top:438px;width:552px;height:1px;background:#E2E2E2;"></div>
<div class="b" style="left:1264px;top:450.6px;width:19.5px;height:19.5px;background:#F7F7F7;border:1px solid #D4D4D4;border-radius:4px;"></div>
<div class="t" style="left:1289.9px;top:450px;font-size:15px;color:#111;transform:scaleX(0.8966);transform-origin:0 50%;">Podsetnik:</div>
<div class="b" style="left:1359.5px;top:447.3px;width:149.2px;height:26.5px;background:#F3F3F3;border:1px solid #E6E6E6;border-bottom:1px solid #E2E2E2;border-radius:4px;"></div>
<div class="t" style="left:1364.5px;top:451px;font-size:15px;color:#C2C2C2;transform:scaleX(0.9229);transform-origin:0 50%;">15 minuta</div>
<svg class="b" style="left:1489.7px;top:457.3px;" width="12" height="7.4" viewBox="0 0 12 7.4"><path d="M1 1 L6 6.4 L11 1" fill="none" stroke="#C2C2C2" stroke-width="1.4" stroke-linecap="round" stroke-linejoin="round"/></svg>
<div class="t" style="left:1514.7px;top:451px;font-size:15px;color:#111;transform:scaleX(0.8800);transform-origin:0 50%;letter-spacing:-0.088px;">Prikaži kao:</div>
<div class="b" style="left:1586.5px;top:447.3px;width:230.5px;height:27px;background:#F7F7F7;border:1px solid #E6E6E6;border-bottom:1.5px solid #ADADAD;border-radius:4px;"></div>
<div class="b" style="left:1591px;top:454px;width:14.3px;height:13.6px;background:#1373D0;"></div>
<div class="t" style="left:1609.7px;top:451px;font-size:15px;color:#111;transform:scaleX(0.9041);transform-origin:0 50%;">Zauzeto</div>
<svg class="b" style="left:1797px;top:457.3px;" width="12" height="7.4" viewBox="0 0 12 7.4"><path d="M1 1 L6 6.4 L11 1" fill="none" stroke="#222" stroke-width="1.5" stroke-linecap="round" stroke-linejoin="round"/></svg>
<div class="b" style="left:1264px;top:483px;width:552px;height:1px;background:#E2E2E2;"></div>
<div class="b" style="left:1264.4px;top:492.5px;width:552.2px;height:328.6px;background:#F6F6F6;border:1px solid #E6E6E6;border-bottom:2px solid #2B579A;border-radius:4px;"></div>
<div class="b" style="left:1268.5px;top:498px;width:1px;height:15px;background:#222;"></div>
<div class="t" style="left:1268.7px;top:496px;font-size:14.5px;color:#111;transform:scaleX(0.9164);transform-origin:0 50%;">Ugovor za lice van RO 8 - POPOVIĆ ZORICA u firmi 126 - DP PRODUCTS DOO</div>
<div class="t" style="left:1268.7px;top:513px;font-size:14.5px;color:#111;transform:scaleX(0.9148);transform-origin:0 50%;">BEOGRAD ističe 15.02.2025!</div>
<div class="t" style="left:1268.7px;top:547px;font-size:14.5px;color:#111;transform:scaleX(0.9333);transform-origin:0 50%;">Poruka operatera: BizniSoft</div>
<div class="b" style="left:1426.2px;top:826.5px;width:93.4px;height:28.4px;background:#F2F2F2;border:1px solid #E0E0E0;border-bottom-color:#E4E4E4;border-radius:4px;"></div>
<div class="t" style="left:1463.1px;top:830px;font-size:15px;color:#C4C4C4;transform:scaleX(0.8800);transform-origin:0 50%;letter-spacing:-0.836px;">OK</div>
<div class="b" style="left:1463.4px;top:846.5px;width:11.0838px;height:1px;background:#C4C4C4;"></div>
<div class="b" style="left:1525.5px;top:826.5px;width:92.5px;height:28.4px;background:#FBFBFB;border:1px solid #E0E0E0;border-bottom-color:#C8C8C8;border-radius:4px;"></div>
<div class="t" style="left:1543.5px;top:830px;font-size:15px;color:#111;transform:scaleX(0.9144);transform-origin:0 50%;">Odustani</div>
<div class="b" style="left:1624.1px;top:826.5px;width:92.9px;height:28.4px;background:#FBFBFB;border:1px solid #E0E0E0;border-bottom-color:#C8C8C8;border-radius:4px;"></div>
<div class="t" style="left:1658.7px;top:830px;font-size:15px;color:#111;transform:scaleX(0.8800);transform-origin:0 50%;letter-spacing:-0.492px;">Briši</div>
<div class="b" style="left:1659px;top:846.5px;width:9.5052px;height:1px;background:#111;"></div>
<div class="b" style="left:1723.1px;top:826.5px;width:92.9px;height:28.4px;background:#FBFBFB;border:1px solid #E0E0E0;border-bottom-color:#C8C8C8;border-radius:4px;"></div>
<div class="t" style="left:1733.7px;top:830px;font-size:15px;color:#111;transform:scaleX(0.9154);transform-origin:0 50%;">Ponavljanje</div>
<div class="b" style="left:1734px;top:846.5px;width:9.5052px;height:1px;background:#111;"></div>
</body></html>
